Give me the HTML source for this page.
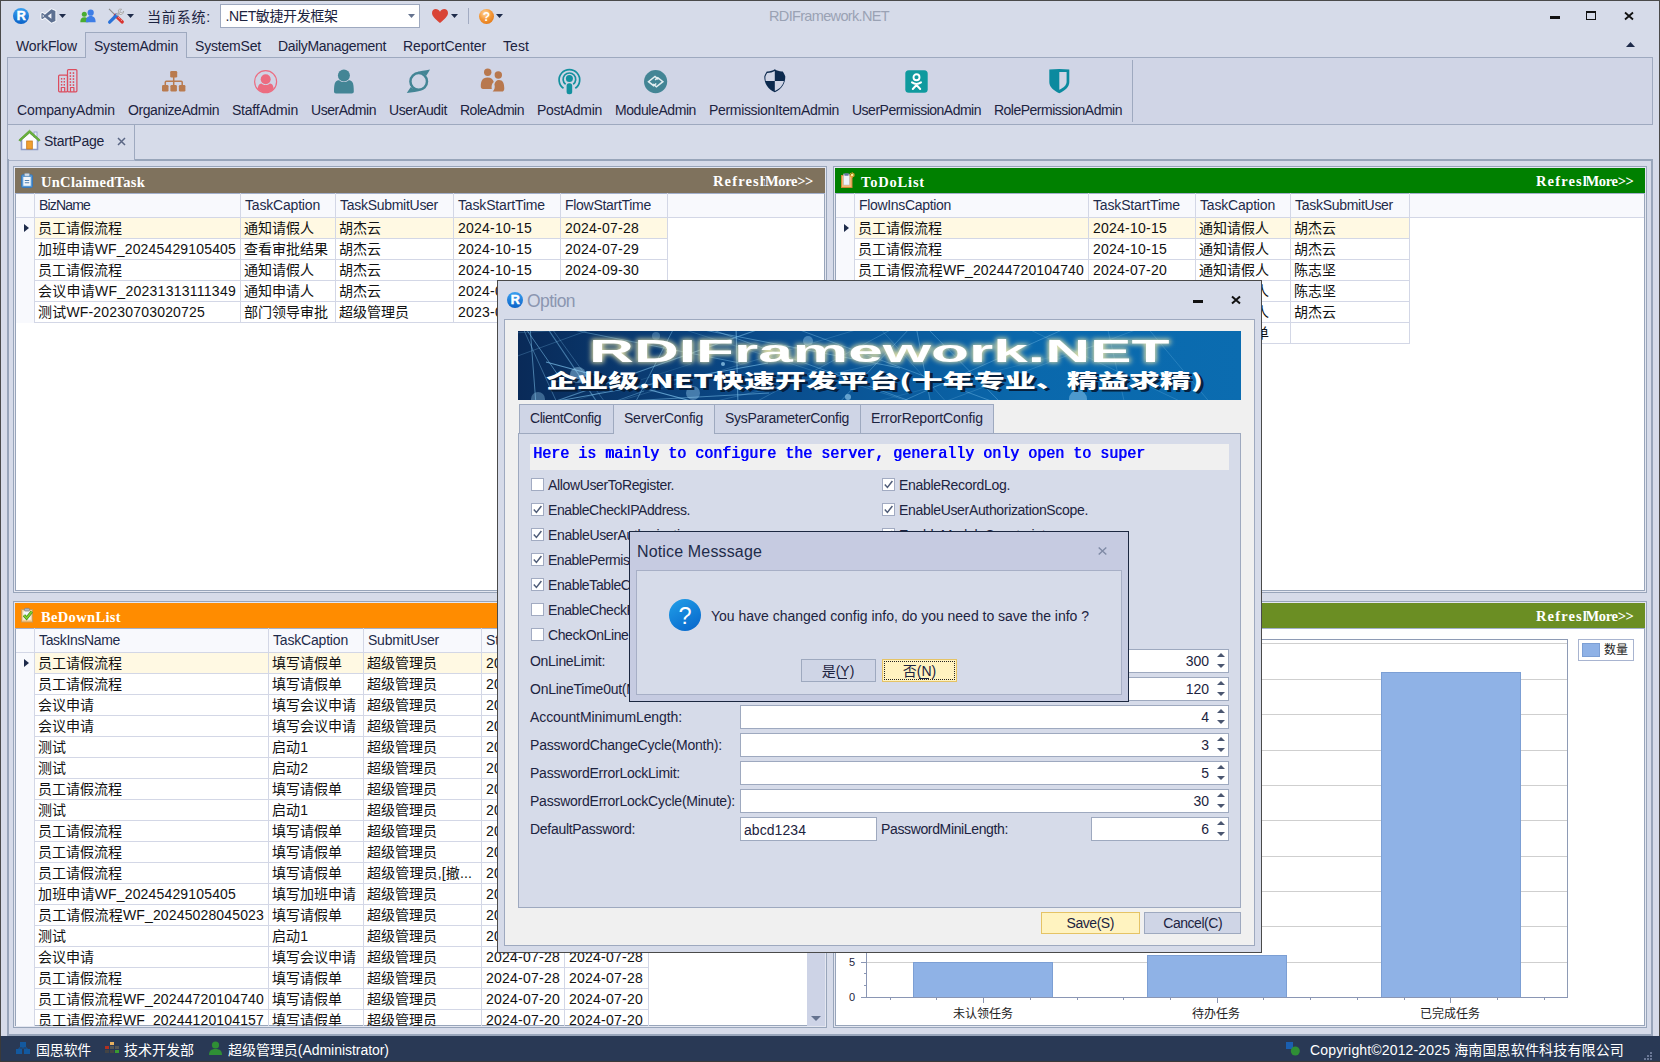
<!DOCTYPE html>
<html lang="zh-CN"><head><meta charset="utf-8"><title>RDIFramework.NET</title>
<style>
html,body{margin:0;padding:0;background:#d6dbe9}
#root{position:relative;width:1660px;height:1062px;overflow:hidden;font-family:"Liberation Sans","Noto Sans CJK SC",sans-serif;font-size:14px}
.a{position:absolute;box-sizing:border-box}
.t{white-space:pre}
svg{display:block;overflow:visible}
</style></head>
<body><div id="root">
<div class="a" style="left:0px;top:0px;width:1660px;height:1062px;background:#d6dbe9;"></div>
<div class="a" style="left:0px;top:0px;width:1660px;height:1px;background:#4a4a4a;"></div>
<div class="a" style="left:0px;top:0px;width:1px;height:1062px;background:#4a4a4a;"></div>
<div class="a" style="left:1659px;top:0px;width:1px;height:1062px;background:#4a4a4a;"></div>
<svg class="a" style="left:13.0px;top:8.0px" width="16" height="16" viewBox="0 0 16 16"><defs><linearGradient id="rg21" x1="0" y1="0" x2="0" y2="1"><stop offset="0" stop-color="#3aa0f0"/><stop offset="1" stop-color="#0a62c8"/></linearGradient></defs><circle cx="8" cy="8" r="8" fill="url(#rg21)"/><text x="8.300" y="12.300" font-family="Liberation Sans,sans-serif" font-weight="bold" font-size="12.500" text-anchor="middle" fill="#fff" stroke="#fff" stroke-width=".5">R</text></svg>
<svg class="a" style="left:41px;top:9px" width="15" height="14" viewBox="0 0 15 14"><path fill-rule="evenodd" d="M10.400 0.300L14.400 2v10l-4 1.700-6.500-5.500-2.300 1.900L0.400 9.400V4.600l1.200-.7 2.300 1.900zM10.400 4.200L6.700 7l3.700 2.800zM1.700 5.600v2.800L3.100 7z" fill="#5d7091" stroke="#f6f8fc" stroke-width="2" paint-order="stroke" stroke-linejoin="round"/></svg>
<svg class="a" style="left:59px;top:14px" width="7" height="4" viewBox="0 0 7 4"><path d="M0 0h7l-3.5 4z" fill="#1e2b4a"/></svg>
<svg class="a" style="left:80px;top:9px" width="16" height="14" viewBox="0 0 16 14"><circle cx="4.300" cy="5.300" r="2.500" fill="#49ad31"/><path d="M0.300 13.200c0-3.400 1.200-5 4-5s4 1.600 4 5z" fill="#49ad31"/><circle cx="10.700" cy="3.700" r="3.100" fill="#3d7de6"/><path d="M5.800 13.300c0-4 1.600-6.200 4.900-6.200s4.900 2.200 4.900 6.200z" fill="#3d7de6"/></svg>
<svg class="a" style="left:108px;top:8px" width="16" height="16" viewBox="0 0 16 16"><path d="M1 0.800l6.500 6.500" stroke="#8a8a8a" stroke-width="1.100"/><path d="M7.300 7.300l7 6.700" stroke="#d9332f" stroke-width="3.200" stroke-linecap="round"/><path d="M8.300 7.300l6 5.800" stroke="#fff" stroke-width=".8" stroke-dasharray="1 1.200"/><path d="M1.600 14.200L8.800 7" stroke="#2a72d8" stroke-width="3.200" stroke-linecap="round"/><path d="M8.500 7.300l2.500-2.500" stroke="#b8b8b8" stroke-width="2.200"/><path d="M10.300 2.200a3 3 0 0 1 3.300-1l-1.700 1.700.4 1.600 1.600.4 1.700-1.700a3 3 0 0 1-4 3.200z" fill="#e8e8e8" stroke="#8a8a8a" stroke-width=".6"/></svg>
<svg class="a" style="left:127px;top:14px" width="7" height="4" viewBox="0 0 7 4"><path d="M0 0h7l-3.5 4z" fill="#1e2b4a"/></svg>
<div class="a t" style="top:6.5px;font-size:14px;line-height:20px;color:#1c2340;letter-spacing:0.822px;left:147px;">当前系统:</div>
<div class="a" style="left:220px;top:4px;width:200px;height:24px;background:#fff;border:1px solid #9ea9bf;box-sizing:border-box;"></div>
<div class="a t" style="top:6px;font-size:14px;line-height:20px;color:#1c2340;letter-spacing:-0.389px;left:225.5px;">.NET敏捷开发框架</div>
<svg class="a" style="left:408px;top:14px" width="7" height="4" viewBox="0 0 7 4"><path d="M0 0h7l-3.5 4z" fill="#65738f"/></svg>
<svg class="a" style="left:432px;top:9px" width="16" height="14" viewBox="0 0 16 14"><path transform="scale(.941 1)" d="M8.5 14C3 9.5 0 7 0 4 0 1.500 1.800 0 4 0c1.800 0 3.500 1 4.500 2.800C9.500 1 11.200 0 13 0c2.200 0 4 1.500 4 4 0 3-3 5.500-8.500 10z" fill="#d94436"/></svg>
<svg class="a" style="left:451px;top:14px" width="7" height="4" viewBox="0 0 7 4"><path d="M0 0h7l-3.5 4z" fill="#1e2b4a"/></svg>
<div class="a" style="left:468px;top:8px;width:1px;height:16px;background:#a2abc2;"></div>
<svg class="a" style="left:478.5px;top:9px" width="15" height="15" viewBox="0 0 15 15"><defs><radialGradient id="qg" cx=".4" cy=".3" r=".8"><stop offset="0" stop-color="#ffd9a0"/><stop offset=".5" stop-color="#f59a3a"/><stop offset="1" stop-color="#e07412"/></radialGradient></defs><circle cx="7.500" cy="7.500" r="7.500" fill="url(#qg)"/><text x="7.500" y="12" font-size="12" font-weight="bold" text-anchor="middle" fill="#fff" font-family="Liberation Sans,sans-serif">?</text></svg>
<svg class="a" style="left:496px;top:14px" width="7" height="4" viewBox="0 0 7 4"><path d="M0 0h7l-3.5 4z" fill="#1e2b4a"/></svg>
<div class="a t" style="top:6px;font-size:14.5px;line-height:20px;color:#9aa2b4;letter-spacing:-0.657px;left:769px;">RDIFramework.NET</div>
<div class="a" style="left:1550px;top:16px;width:10px;height:3px;background:#111;"></div>
<div class="a" style="left:1586px;top:11px;width:10px;height:9px;border:1px solid #111;box-sizing:border-box;border-top-width:2px;"></div>
<svg class="a" style="left:1624px;top:12px" width="10" height="8" viewBox="0 0 10 8"><path d="M1 0.5L9 7.500M9 0.500L1 7.500" stroke="#111" stroke-width="1.800"/></svg>
<svg class="a" style="left:1626px;top:42px" width="9" height="5" viewBox="0 0 9 5"><path d="M0 5h9l-4.5 -5z" fill="#1e2b4a"/></svg>
<div class="a" style="left:7px;top:57px;width:1646px;height:68px;background:#d0d5e6;border:1px solid #9ea9bf;box-sizing:border-box;"></div>
<div class="a" style="left:85px;top:32px;width:102px;height:26px;background:#d0d5e6;border:1px solid #9ea9bf;box-sizing:border-box;border-bottom:none;"></div>
<div class="a t" style="top:36px;font-size:14px;line-height:20px;color:#1c2340;letter-spacing:-0.121px;left:16px;">WorkFlow</div>
<div class="a t" style="top:36px;font-size:14px;line-height:20px;color:#1c2340;letter-spacing:-0.214px;left:94px;">SystemAdmin</div>
<div class="a t" style="top:36px;font-size:14px;line-height:20px;color:#1c2340;letter-spacing:-0.189px;left:195px;">SystemSet</div>
<div class="a t" style="top:36px;font-size:14px;line-height:20px;color:#1c2340;letter-spacing:-0.323px;left:278px;">DailyManagement</div>
<div class="a t" style="top:36px;font-size:14px;line-height:20px;color:#1c2340;letter-spacing:-0.087px;left:403px;">ReportCenter</div>
<div class="a t" style="top:36px;font-size:14px;line-height:20px;color:#1c2340;letter-spacing:0.078px;left:503px;">Test</div>
<div class="a t" style="top:100px;font-size:14px;line-height:20px;color:#1c2340;letter-spacing:-0.134px;left:17px;">CompanyAdmin</div>
<div class="a t" style="top:100px;font-size:14px;line-height:20px;color:#1c2340;letter-spacing:-0.423px;left:128px;">OrganizeAdmin</div>
<div class="a t" style="top:100px;font-size:14px;line-height:20px;color:#1c2340;letter-spacing:-0.223px;left:232px;">StaffAdmin</div>
<div class="a t" style="top:100px;font-size:14px;line-height:20px;color:#1c2340;letter-spacing:-0.472px;left:311px;">UserAdmin</div>
<div class="a t" style="top:100px;font-size:14px;line-height:20px;color:#1c2340;letter-spacing:-0.385px;left:389px;">UserAudit</div>
<div class="a t" style="top:100px;font-size:14px;line-height:20px;color:#1c2340;letter-spacing:-0.498px;left:460px;">RoleAdmin</div>
<div class="a t" style="top:100px;font-size:14px;line-height:20px;color:#1c2340;letter-spacing:-0.300px;left:537px;">PostAdmin</div>
<div class="a t" style="top:100px;font-size:14px;line-height:20px;color:#1c2340;letter-spacing:-0.419px;left:615px;">ModuleAdmin</div>
<div class="a t" style="top:100px;font-size:14px;line-height:20px;color:#1c2340;letter-spacing:-0.324px;left:709px;">PermissionItemAdmin</div>
<div class="a t" style="top:100px;font-size:14px;line-height:20px;color:#1c2340;letter-spacing:-0.499px;left:852px;">UserPermissionAdmin</div>
<div class="a t" style="top:100px;font-size:14px;line-height:20px;color:#1c2340;letter-spacing:-0.512px;left:994px;">RolePermissionAdmin</div>
<div class="a" style="left:1132px;top:60px;width:1px;height:62px;background:#9ea9bf;"></div>
<svg class="a" style="left:58px;top:69px" width="20" height="24" viewBox="0 0 20 24"><g fill="none" stroke="#dc4c5e" stroke-width="1.200" stroke-linejoin="round"><rect x="0.600" y="6.200" width="8.900" height="16.600" rx="1"/><rect x="9.500" y="0.600" width="9.400" height="22.200" rx="1"/><path d="M3.300 22.800v-4.300h3.400v4.300M12.500 22.800v-4.300h3.400v4.300"/></g><g fill="#dc4c5e"><rect x="2.9" y="9" width="1.400" height="1.600"/><rect x="5.6" y="9" width="1.400" height="1.600"/><rect x="2.9" y="12" width="1.400" height="1.600"/><rect x="5.6" y="12" width="1.400" height="1.600"/><rect x="2.9" y="15" width="1.400" height="1.600"/><rect x="5.6" y="15" width="1.400" height="1.600"/><rect x="11.6" y="3.2" width="1.500" height="1.700"/><rect x="14.7" y="3.2" width="1.500" height="1.700"/><rect x="11.6" y="6.2" width="1.500" height="1.700"/><rect x="14.7" y="6.2" width="1.500" height="1.700"/><rect x="11.6" y="9.2" width="1.500" height="1.700"/><rect x="14.7" y="9.2" width="1.500" height="1.700"/><rect x="11.6" y="12.2" width="1.500" height="1.700"/><rect x="14.7" y="12.2" width="1.500" height="1.700"/><rect x="11.6" y="15.2" width="1.500" height="1.700"/><rect x="14.7" y="15.2" width="1.500" height="1.700"/></g></svg>
<svg class="a" style="left:162px;top:71px" width="24" height="21" viewBox="0 0 24 21"><g fill="#b97b4f"><rect x="8.200" y="0" width="7" height="6.600" rx="1.300"/><rect x="0" y="14" width="6.500" height="6.400" rx="1.200"/><rect x="8.400" y="14" width="6.500" height="6.400" rx="1.200"/><rect x="16.900" y="14" width="6.500" height="6.400" rx="1.200"/></g><path d="M11.700 6v8.500M3.300 14.500V11.200q0-1 1-1H19.200q1 0 1 1v3.300" fill="none" stroke="#b97b4f" stroke-width="1.500"/></svg>
<svg class="a" style="left:254px;top:69.5px" width="24" height="24" viewBox="0 0 24 24"><defs><clipPath id="sc"><circle cx="11.600" cy="11.700" r="10.600"/></clipPath></defs><circle cx="11.600" cy="11.700" r="11" fill="none" stroke="#ec6c80" stroke-width="1.200"/><circle cx="11.700" cy="9.200" r="5" fill="#ec6c80"/><path d="M3.500 24c0-6 .5-10.500 4-10.500 1.300 1 2.600 1.500 4.200 1.500s2.900-.5 4.200-1.500c3.500 0 4 4.500 4 10.500z" fill="#ec6c80" clip-path="url(#sc)"/></svg>
<svg class="a" style="left:333px;top:68.5px" width="22" height="25" viewBox="0 0 22 25"><circle cx="10.900" cy="6.500" r="6" fill="#438595"/><path d="M1 22.500c0-4 .300-8 1.500-9.500 1-1.300 2.500-1.800 4-1.600 1.300 1.100 2.800 1.700 4.400 1.700s3.100-.6 4.400-1.700c1.500-.2 3 .3 4 1.600 1.200 1.500 1.500 5.500 1.500 9.500 0 1.300-.8 2-2 2H3c-1.200 0-2-.7-2-2z" fill="#438595"/></svg>
<svg class="a" style="left:406px;top:69px" width="25" height="25" viewBox="0 0 25 25"><circle cx="12.700" cy="12.400" r="8.300" fill="none" stroke="#438595" stroke-width="2.500"/><path d="M9.500 3.600C14 1.800 19 1.500 24 0.500c-1.300 2.200-2.400 4.300-3.800 6.200-2.500-2.600-6-3.500-10.700-3.100z" fill="#438595"/><path d="M16 21.200C11.500 23 6 23.300 0.800 24c1.300-2 2.600-4.100 4-6 2.500 2.600 6.500 3.500 11.200 3.200z" fill="#438595"/></svg>
<svg class="a" style="left:480px;top:68px" width="25" height="25" viewBox="0 0 25 25"><g fill="#b8784e"><circle cx="7.700" cy="4.300" r="3.700"/><path d="M0.800 18.500c0-5 1.200-9 6.700-9 3.700 0 5.600 2 6.300 4.600-2 1.600-2.600 4.200-2 6.900H3c-1.400 0-2.200-.9-2.200-2.500z"/><circle cx="18.300" cy="7" r="3.700"/><path d="M12.600 23.600c2.200-1.800 2.600-4.500 1.800-7.300.9-2.700 1.900-4.300 4.500-4.300 4 0 5.400 3.300 5.400 8.500 0 2-.9 3.100-2.500 3.100z"/></g></svg>
<svg class="a" style="left:558px;top:68px" width="24" height="27" viewBox="0 0 24 27"><g fill="none" stroke="#14919f" stroke-width="1.700"><path d="M5.500 20.300A10.300 10.300 0 1 1 17.300 20.300"/><path d="M7.600 16.300A6.300 6.300 0 1 1 15.200 16.300"/></g><circle cx="11.400" cy="10.600" r="3.500" fill="#14919f"/><rect x="8.600" y="15.300" width="5.600" height="11" rx="2.500" fill="#14919f"/></svg>
<svg class="a" style="left:644px;top:69.8px" width="24" height="24" viewBox="0 0 24 24"><circle cx="11.600" cy="11.600" r="11.600" fill="#438595"/><g fill="none" stroke="#e4eef1" stroke-width="1.500" stroke-linejoin="miter"><path d="M14.400 9.300L11 6.500 4.500 11.650 9.600 15.700 12.300 13.500"/><path d="M9 14L12.400 16.800 18.900 11.650 13.800 7.600 11.100 9.800"/></g></svg>
<svg class="a" style="left:764px;top:68.6px" width="22" height="24" viewBox="0 0 22 24"><path d="M10.800 0.300C8.500 1.800 5.800 2.600 2.800 2.400 1.800 4 0.800 5.500 0.300 7.500c0 7 3.500 12.500 10.500 15.700C17.800 20 21.300 14.500 21.300 7.500c-.5-2-1.500-3.500-2.500-5.100-3 .2-5.700-.6-8-2.100z" fill="#0c2a4e"/><path d="M10.800 2v9.900H1.700C1.400 10.200 1.300 8.800 1.400 7.600c.4-1.300 1-2.400 1.800-3.700 2.900 0 5.500-.6 7.600-1.900z" fill="#d0d5e6"/><path d="M10.800 11.900h9.100c-.9 4.100-3.800 7.600-9.100 10.100z" fill="#d0d5e6"/></svg>
<svg class="a" style="left:905px;top:69.8px" width="23" height="23" viewBox="0 0 23 23"><rect x="0.300" y="0.300" width="22.400" height="22.400" rx="3.500" fill="#0f9a9e"/><circle cx="11.500" cy="7.300" r="3" fill="none" stroke="#fff" stroke-width="1.900"/><path d="M7 12.400c2.800 1.900 6.200 1.900 9 0M11.500 14v1.500M11.500 15l-3.700 4M11.500 15l3.700 4" fill="none" stroke="#fff" stroke-width="2" stroke-linecap="round"/></svg>
<svg class="a" style="left:1049px;top:68.6px" width="21" height="25" viewBox="0 0 21 25"><path d="M0.300 0.500Q10.200 -0.300 20.300 0.500V13c0 5-4.200 8.500-10 11.200C4.500 21.500 0.300 18 0.300 13z" fill="#0b8a9f"/><path d="M10.300 3h7.300v9.800c0 3.300-2.800 6-7.300 8z" fill="#d0d5e6"/></svg>
<div class="a" style="left:7px;top:159px;width:1646px;height:877px;background:#d6dbe9;border:2px solid #98a5ba;box-sizing:border-box;"></div>
<div class="a" style="left:7px;top:125px;width:128px;height:36px;background:#d6dbe9;border:1px solid #9ea9bf;box-sizing:border-box;border-bottom:none;border-top:none;"></div>
<div class="a" style="left:7px;top:159px;width:2px;height:4px;background:#98a5ba;"></div>
<div class="a" style="left:9px;top:160px;width:126px;height:1px;background:#a9b3c8;"></div>
<svg class="a" style="left:18px;top:129px" width="23" height="22" viewBox="0 0 23 22"><path d="M3.500 10v10.500h16V10L11.500 3z" fill="#fdfdff" stroke="#8d9cc8" stroke-width="1.600"/><rect x="8.700" y="12" width="5.600" height="8" fill="#f0a030" stroke="#c87818" stroke-width=".8"/><rect x="16" y="3" width="3" height="5" fill="#e8ecf8" stroke="#8d9cc8" stroke-width=".8"/><path d="M0.800 11L11.500 1.200 22.200 11l-1.300 1.300L11.500 4 2.100 12.300z" fill="#6ab43a" stroke="#4a9020" stroke-width=".6"/></svg>
<div class="a t" style="top:131px;font-size:14px;line-height:20px;color:#1c2340;letter-spacing:-0.252px;left:44px;">StartPage</div>
<svg class="a" style="left:117px;top:137px" width="9" height="9" viewBox="0 0 9 9"><path d="M1 1l7 7M8 1l-7 7" stroke="#5a6684" stroke-width="1.500"/></svg>
<div class="a" style="left:0px;top:1036px;width:1660px;height:26px;background:#293955;"></div>
<div class="a" style="left:0px;top:1061px;width:1660px;height:1px;background:#3a3a3a;"></div>
<div class="a" style="left:0px;top:1036px;width:1px;height:26px;background:#3a3a3a;"></div>
<svg class="a" style="left:16px;top:1042px" width="14" height="13" viewBox="0 0 14 13"><rect x="4" y="0" width="6" height="5" fill="#13599f"/><rect x="0" y="7" width="6" height="5" fill="#13599f"/><rect x="8" y="7" width="6" height="5" fill="#13599f"/><path d="M3 7V6h8v1M7 5v1" stroke="#13599f" fill="none"/></svg>
<div class="a t" style="top:1039.5px;font-size:14px;line-height:20px;color:#fff;letter-spacing:-0.250px;left:36px;">国思软件</div>
<svg class="a" style="left:105px;top:1042px" width="14" height="13" viewBox="0 0 14 13"><rect x="5" y="0" width="4" height="3" fill="#e8b060"/><rect x="0" y="4" width="4" height="3" fill="#b03020"/><rect x="5" y="4" width="4" height="3" fill="#555"/><rect x="10" y="4" width="4" height="3" fill="#555"/><rect x="0" y="8" width="4" height="3" fill="#444"/><rect x="5" y="8" width="4" height="3" fill="#444"/><rect x="10" y="8" width="4" height="3" fill="#3a9a30"/></svg>
<div class="a t" style="top:1039.5px;font-size:14px;line-height:20px;color:#fff;left:124px;">技术开发部</div>
<svg class="a" style="left:209px;top:1041px" width="13" height="14" viewBox="0 0 13 14"><circle cx="6.500" cy="4" r="3.600" fill="#2f8f35"/><path d="M0 14c0-4 2-6 6.500-6s6.500 2 6.500 6z" fill="#2f8f35"/></svg>
<div class="a t" style="top:1039.5px;font-size:14px;line-height:20px;color:#fff;letter-spacing:-0.040px;left:228px;">超级管理员(Administrator)</div>
<svg class="a" style="left:1286px;top:1042px" width="16" height="14" viewBox="0 0 16 14"><rect x="0" y="0" width="7" height="7" fill="#1a5fb0"/><circle cx="9.300" cy="9" r="4.500" fill="#2f8f35"/></svg>
<div class="a t" style="top:1039.5px;font-size:14px;line-height:20px;color:#fff;letter-spacing:0.154px;left:1310px;">Copyright©2012-2025 海南国思软件科技有限公司</div>
<svg class="a" style="left:1644px;top:1052px" width="9" height="9" viewBox="0 0 9 9"><g fill="#6a7896"><rect x="6" y="0" width="2" height="2"/><rect x="3" y="3" width="2" height="2"/><rect x="6" y="3" width="2" height="2"/><rect x="0" y="6" width="2" height="2"/><rect x="3" y="6" width="2" height="2"/><rect x="6" y="6" width="2" height="2"/></g></svg>
<div class="a" style="left:13px;top:166px;width:814px;height:427px;background:#e4e7f1;border:1px solid #98a5ba;box-sizing:border-box;"></div>
<div class="a" style="left:15px;top:168px;width:810px;height:423px;background:#fff;border:1px solid #98a5ba;box-sizing:border-box;"></div>
<div class="a" style="left:15px;top:168px;width:810px;height:25px;background:#7f725d;"></div>
<svg class="a" style="left:21px;top:173px" width="12" height="15" viewBox="0 0 12 15"><rect x="0.500" y="1.800" width="11" height="12.700" rx="1.300" fill="#5a9ad4" stroke="#3a78b8"/><rect x="3.500" y="0.300" width="5" height="3" rx="1" fill="#cfdcea" stroke="#7890a8" stroke-width=".6"/><rect x="2.300" y="4" width="7.400" height="8.800" fill="#f2f6fb"/><path d="M3.800 7.500h4.400M3.800 9.800h4.400" stroke="#4f7fb0" stroke-width="1.100"/></svg>
<div class="a t" style="top:171.5px;font-size:14.5px;line-height:20px;color:#fff;font-family:'Liberation Serif','Noto Serif CJK SC',serif;font-weight:bold;letter-spacing:0.292px;left:41px;">UnClaimedTask</div>
<div class="a t" style="top:170.5px;font-size:14.5px;line-height:20px;color:#fff;font-family:'Liberation Serif','Noto Serif CJK SC',serif;font-weight:bold;letter-spacing:1.134px;left:713px;">Refresh</div>
<div class="a t" style="top:170.5px;font-size:14.5px;line-height:20px;color:#fff;font-family:'Liberation Serif','Noto Serif CJK SC',serif;font-weight:bold;letter-spacing:-0.346px;left:765px;background:#7f725d;line-height:16px;margin-top:2px;">More&gt;&gt;</div>
<div class="a" style="left:16px;top:193px;width:808px;height:24px;background:#f8f9fd;"></div>
<div class="a" style="left:15px;top:193px;width:810px;height:1px;background:#a3b0cc;"></div>
<div class="a" style="left:16px;top:217px;width:808px;height:1px;background:#d3d7e6;"></div>
<div class="a" style="left:16px;top:218px;width:18px;height:105px;background:#f8f9fd;"></div>
<div class="a" style="left:35px;top:218px;width:632px;height:20px;background:#fff9e3;"></div>
<div class="a" style="left:34px;top:238px;width:634px;height:1px;background:#d3d7e6;"></div>
<div class="a" style="left:34px;top:259px;width:634px;height:1px;background:#d3d7e6;"></div>
<div class="a" style="left:34px;top:280px;width:634px;height:1px;background:#d3d7e6;"></div>
<div class="a" style="left:34px;top:301px;width:634px;height:1px;background:#d3d7e6;"></div>
<div class="a" style="left:34px;top:322px;width:634px;height:1px;background:#d3d7e6;"></div>
<div class="a" style="left:34px;top:193px;width:1px;height:130px;background:#d3d7e6;"></div>
<div class="a" style="left:240px;top:193px;width:1px;height:130px;background:#d3d7e6;"></div>
<div class="a" style="left:335px;top:193px;width:1px;height:130px;background:#d3d7e6;"></div>
<div class="a" style="left:453px;top:193px;width:1px;height:130px;background:#d3d7e6;"></div>
<div class="a" style="left:560px;top:193px;width:1px;height:130px;background:#d3d7e6;"></div>
<div class="a" style="left:667px;top:193px;width:1px;height:130px;background:#d3d7e6;"></div>
<svg class="a" style="left:24px;top:224.0px" width="5" height="8" viewBox="0 0 5 8"><path d="M0 0v8l5 -4.0z" fill="#1e2b4a"/></svg>
<div class="a t" style="top:195px;font-size:14px;line-height:20px;color:#1e2b4a;letter-spacing:-0.828px;left:39px;">BizName</div>
<div class="a t" style="top:195px;font-size:14px;line-height:20px;color:#1e2b4a;letter-spacing:-0.186px;left:245px;">TaskCaption</div>
<div class="a t" style="top:195px;font-size:14px;line-height:20px;color:#1e2b4a;letter-spacing:-0.280px;left:340px;">TaskSubmitUser</div>
<div class="a t" style="top:195px;font-size:14px;line-height:20px;color:#1e2b4a;letter-spacing:-0.150px;left:458px;">TaskStartTime</div>
<div class="a t" style="top:195px;font-size:14px;line-height:20px;color:#1e2b4a;letter-spacing:-0.286px;left:565px;">FlowStartTime</div>
<div class="a t" style="top:217px;font-size:14px;line-height:20px;color:#111;left:38px;max-width:201px;overflow:hidden;height:20px;line-height:20px;margin-top:0.500px;">员工请假流程</div>
<div class="a t" style="top:217px;font-size:14px;line-height:20px;color:#111;left:244px;max-width:90px;overflow:hidden;height:20px;line-height:20px;margin-top:0.500px;">通知请假人</div>
<div class="a t" style="top:217px;font-size:14px;line-height:20px;color:#111;left:339px;max-width:113px;overflow:hidden;height:20px;line-height:20px;margin-top:0.500px;">胡杰云</div>
<div class="a t" style="top:217px;font-size:14px;line-height:20px;color:#111;letter-spacing:0.237px;left:458px;max-width:102px;overflow:hidden;height:20px;line-height:20px;margin-top:0.500px;">2024-10-15</div>
<div class="a t" style="top:217px;font-size:14px;line-height:20px;color:#111;letter-spacing:0.237px;left:565px;max-width:102px;overflow:hidden;height:20px;line-height:20px;margin-top:0.500px;">2024-07-28</div>
<div class="a t" style="top:238px;font-size:14px;line-height:20px;color:#111;letter-spacing:0.164px;left:38px;max-width:201px;overflow:hidden;height:20px;line-height:20px;margin-top:0.500px;">加班申请WF_20245429105405</div>
<div class="a t" style="top:238px;font-size:14px;line-height:20px;color:#111;left:244px;max-width:90px;overflow:hidden;height:20px;line-height:20px;margin-top:0.500px;">查看审批结果</div>
<div class="a t" style="top:238px;font-size:14px;line-height:20px;color:#111;left:339px;max-width:113px;overflow:hidden;height:20px;line-height:20px;margin-top:0.500px;">胡杰云</div>
<div class="a t" style="top:238px;font-size:14px;line-height:20px;color:#111;letter-spacing:0.237px;left:458px;max-width:102px;overflow:hidden;height:20px;line-height:20px;margin-top:0.500px;">2024-10-15</div>
<div class="a t" style="top:238px;font-size:14px;line-height:20px;color:#111;letter-spacing:0.237px;left:565px;max-width:102px;overflow:hidden;height:20px;line-height:20px;margin-top:0.500px;">2024-07-29</div>
<div class="a t" style="top:259px;font-size:14px;line-height:20px;color:#111;left:38px;max-width:201px;overflow:hidden;height:20px;line-height:20px;margin-top:0.500px;">员工请假流程</div>
<div class="a t" style="top:259px;font-size:14px;line-height:20px;color:#111;left:244px;max-width:90px;overflow:hidden;height:20px;line-height:20px;margin-top:0.500px;">通知请假人</div>
<div class="a t" style="top:259px;font-size:14px;line-height:20px;color:#111;left:339px;max-width:113px;overflow:hidden;height:20px;line-height:20px;margin-top:0.500px;">胡杰云</div>
<div class="a t" style="top:259px;font-size:14px;line-height:20px;color:#111;letter-spacing:0.237px;left:458px;max-width:102px;overflow:hidden;height:20px;line-height:20px;margin-top:0.500px;">2024-10-15</div>
<div class="a t" style="top:259px;font-size:14px;line-height:20px;color:#111;letter-spacing:0.237px;left:565px;max-width:102px;overflow:hidden;height:20px;line-height:20px;margin-top:0.500px;">2024-09-30</div>
<div class="a t" style="top:280px;font-size:14px;line-height:20px;color:#111;letter-spacing:0.263px;left:38px;max-width:201px;overflow:hidden;height:20px;line-height:20px;margin-top:0.500px;">会议申请WF_20231313111349</div>
<div class="a t" style="top:280px;font-size:14px;line-height:20px;color:#111;left:244px;max-width:90px;overflow:hidden;height:20px;line-height:20px;margin-top:0.500px;">通知申请人</div>
<div class="a t" style="top:280px;font-size:14px;line-height:20px;color:#111;left:339px;max-width:113px;overflow:hidden;height:20px;line-height:20px;margin-top:0.500px;">胡杰云</div>
<div class="a t" style="top:280px;font-size:14px;line-height:20px;color:#111;letter-spacing:0.237px;left:458px;max-width:102px;overflow:hidden;height:20px;line-height:20px;margin-top:0.500px;">2024-07-20</div>
<div class="a t" style="top:301px;font-size:14px;line-height:20px;color:#111;letter-spacing:0.188px;left:38px;max-width:201px;overflow:hidden;height:20px;line-height:20px;margin-top:0.500px;">测试WF-20230703020725</div>
<div class="a t" style="top:301px;font-size:14px;line-height:20px;color:#111;left:244px;max-width:90px;overflow:hidden;height:20px;line-height:20px;margin-top:0.500px;">部门领导审批</div>
<div class="a t" style="top:301px;font-size:14px;line-height:20px;color:#111;left:339px;max-width:113px;overflow:hidden;height:20px;line-height:20px;margin-top:0.500px;">超级管理员</div>
<div class="a t" style="top:301px;font-size:14px;line-height:20px;color:#111;letter-spacing:0.237px;left:458px;max-width:102px;overflow:hidden;height:20px;line-height:20px;margin-top:0.500px;">2023-07-03</div>
<div class="a" style="left:833px;top:166px;width:814px;height:427px;background:#e4e7f1;border:1px solid #98a5ba;box-sizing:border-box;"></div>
<div class="a" style="left:835px;top:168px;width:810px;height:423px;background:#fff;border:1px solid #98a5ba;box-sizing:border-box;"></div>
<div class="a" style="left:835px;top:168px;width:810px;height:25px;background:#008000;"></div>
<svg class="a" style="left:841px;top:172px" width="15" height="16" viewBox="0 0 15 16"><rect x="0.500" y="3.500" width="10.500" height="12" fill="#f3b874" stroke="#d08838"/><rect x="2.700" y="2" width="5.600" height="11" fill="#eef2fa" stroke="#b0b8c8" stroke-width=".5"/><rect x="3.300" y="1.300" width="4.400" height="2.400" rx=".6" fill="#6878a0"/><path d="M11.200 0.200v5.600M8.400 3h5.600M9.200 1l4 4M13.200 1l-4 4" stroke="#f49a28" stroke-width="1"/><circle cx="11.200" cy="3" r="1.300" fill="#ffe9a0"/></svg>
<div class="a t" style="top:171.5px;font-size:14.5px;line-height:20px;color:#fff;font-family:'Liberation Serif','Noto Serif CJK SC',serif;font-weight:bold;letter-spacing:0.814px;left:861px;">ToDoList</div>
<div class="a t" style="top:170.5px;font-size:14.5px;line-height:20px;color:#fff;font-family:'Liberation Serif','Noto Serif CJK SC',serif;font-weight:bold;letter-spacing:1.134px;left:1536px;">Refresh</div>
<div class="a t" style="top:170.5px;font-size:14.5px;line-height:20px;color:#fff;font-family:'Liberation Serif','Noto Serif CJK SC',serif;font-weight:bold;letter-spacing:-0.346px;left:1585.5px;background:#008000;line-height:16px;margin-top:2px;">More&gt;&gt;</div>
<div class="a" style="left:836px;top:193px;width:808px;height:24px;background:#f8f9fd;"></div>
<div class="a" style="left:835px;top:193px;width:810px;height:1px;background:#a3b0cc;"></div>
<div class="a" style="left:836px;top:217px;width:808px;height:1px;background:#d3d7e6;"></div>
<div class="a" style="left:836px;top:218px;width:18px;height:126px;background:#f8f9fd;"></div>
<div class="a" style="left:855px;top:218px;width:554px;height:20px;background:#fff9e3;"></div>
<div class="a" style="left:854px;top:238px;width:556px;height:1px;background:#d3d7e6;"></div>
<div class="a" style="left:854px;top:259px;width:556px;height:1px;background:#d3d7e6;"></div>
<div class="a" style="left:854px;top:280px;width:556px;height:1px;background:#d3d7e6;"></div>
<div class="a" style="left:854px;top:301px;width:556px;height:1px;background:#d3d7e6;"></div>
<div class="a" style="left:854px;top:322px;width:556px;height:1px;background:#d3d7e6;"></div>
<div class="a" style="left:854px;top:343px;width:556px;height:1px;background:#d3d7e6;"></div>
<div class="a" style="left:854px;top:193px;width:1px;height:151px;background:#d3d7e6;"></div>
<div class="a" style="left:1088px;top:193px;width:1px;height:151px;background:#d3d7e6;"></div>
<div class="a" style="left:1195px;top:193px;width:1px;height:151px;background:#d3d7e6;"></div>
<div class="a" style="left:1290px;top:193px;width:1px;height:151px;background:#d3d7e6;"></div>
<div class="a" style="left:1409px;top:193px;width:1px;height:151px;background:#d3d7e6;"></div>
<svg class="a" style="left:844px;top:224.0px" width="5" height="8" viewBox="0 0 5 8"><path d="M0 0v8l5 -4.0z" fill="#1e2b4a"/></svg>
<div class="a t" style="top:195px;font-size:14px;line-height:20px;color:#1e2b4a;letter-spacing:-0.321px;left:859px;">FlowInsCaption</div>
<div class="a t" style="top:195px;font-size:14px;line-height:20px;color:#1e2b4a;letter-spacing:-0.150px;left:1093px;">TaskStartTime</div>
<div class="a t" style="top:195px;font-size:14px;line-height:20px;color:#1e2b4a;letter-spacing:-0.186px;left:1200px;">TaskCaption</div>
<div class="a t" style="top:195px;font-size:14px;line-height:20px;color:#1e2b4a;letter-spacing:-0.280px;left:1295px;">TaskSubmitUser</div>
<div class="a t" style="top:217px;font-size:14px;line-height:20px;color:#111;left:858px;max-width:229px;overflow:hidden;height:20px;line-height:20px;margin-top:0.500px;">员工请假流程</div>
<div class="a t" style="top:217px;font-size:14px;line-height:20px;color:#111;letter-spacing:0.237px;left:1093px;max-width:102px;overflow:hidden;height:20px;line-height:20px;margin-top:0.500px;">2024-10-15</div>
<div class="a t" style="top:217px;font-size:14px;line-height:20px;color:#111;left:1199px;max-width:90px;overflow:hidden;height:20px;line-height:20px;margin-top:0.500px;">通知请假人</div>
<div class="a t" style="top:217px;font-size:14px;line-height:20px;color:#111;left:1294px;max-width:114px;overflow:hidden;height:20px;line-height:20px;margin-top:0.500px;">胡杰云</div>
<div class="a t" style="top:238px;font-size:14px;line-height:20px;color:#111;left:858px;max-width:229px;overflow:hidden;height:20px;line-height:20px;margin-top:0.500px;">员工请假流程</div>
<div class="a t" style="top:238px;font-size:14px;line-height:20px;color:#111;letter-spacing:0.237px;left:1093px;max-width:102px;overflow:hidden;height:20px;line-height:20px;margin-top:0.500px;">2024-10-15</div>
<div class="a t" style="top:238px;font-size:14px;line-height:20px;color:#111;left:1199px;max-width:90px;overflow:hidden;height:20px;line-height:20px;margin-top:0.500px;">通知请假人</div>
<div class="a t" style="top:238px;font-size:14px;line-height:20px;color:#111;left:1294px;max-width:114px;overflow:hidden;height:20px;line-height:20px;margin-top:0.500px;">胡杰云</div>
<div class="a t" style="top:259px;font-size:14px;line-height:20px;color:#111;letter-spacing:0.149px;left:858px;max-width:229px;overflow:hidden;height:20px;line-height:20px;margin-top:0.500px;">员工请假流程WF_20244720104740</div>
<div class="a t" style="top:259px;font-size:14px;line-height:20px;color:#111;letter-spacing:0.237px;left:1093px;max-width:102px;overflow:hidden;height:20px;line-height:20px;margin-top:0.500px;">2024-07-20</div>
<div class="a t" style="top:259px;font-size:14px;line-height:20px;color:#111;left:1199px;max-width:90px;overflow:hidden;height:20px;line-height:20px;margin-top:0.500px;">通知请假人</div>
<div class="a t" style="top:259px;font-size:14px;line-height:20px;color:#111;left:1294px;max-width:114px;overflow:hidden;height:20px;line-height:20px;margin-top:0.500px;">陈志坚</div>
<div class="a t" style="top:280px;font-size:14px;line-height:20px;color:#111;letter-spacing:0.149px;left:858px;max-width:229px;overflow:hidden;height:20px;line-height:20px;margin-top:0.500px;">员工请假流程WF_20244120104157</div>
<div class="a t" style="top:280px;font-size:14px;line-height:20px;color:#111;letter-spacing:0.237px;left:1093px;max-width:102px;overflow:hidden;height:20px;line-height:20px;margin-top:0.500px;">2024-07-20</div>
<div class="a t" style="top:280px;font-size:14px;line-height:20px;color:#111;left:1199px;max-width:90px;overflow:hidden;height:20px;line-height:20px;margin-top:0.500px;">通知请假人</div>
<div class="a t" style="top:280px;font-size:14px;line-height:20px;color:#111;left:1294px;max-width:114px;overflow:hidden;height:20px;line-height:20px;margin-top:0.500px;">陈志坚</div>
<div class="a t" style="top:301px;font-size:14px;line-height:20px;color:#111;left:858px;max-width:229px;overflow:hidden;height:20px;line-height:20px;margin-top:0.500px;">测试</div>
<div class="a t" style="top:301px;font-size:14px;line-height:20px;color:#111;letter-spacing:0.237px;left:1093px;max-width:102px;overflow:hidden;height:20px;line-height:20px;margin-top:0.500px;">2024-07-03</div>
<div class="a t" style="top:301px;font-size:14px;line-height:20px;color:#111;left:1199px;max-width:90px;overflow:hidden;height:20px;line-height:20px;margin-top:0.500px;">通知请假人</div>
<div class="a t" style="top:301px;font-size:14px;line-height:20px;color:#111;left:1294px;max-width:114px;overflow:hidden;height:20px;line-height:20px;margin-top:0.500px;">胡杰云</div>
<div class="a t" style="top:322px;font-size:14px;line-height:20px;color:#111;left:858px;max-width:229px;overflow:hidden;height:20px;line-height:20px;margin-top:0.500px;">员工请假流程</div>
<div class="a t" style="top:322px;font-size:14px;line-height:20px;color:#111;letter-spacing:0.237px;left:1093px;max-width:102px;overflow:hidden;height:20px;line-height:20px;margin-top:0.500px;">2024-07-03</div>
<div class="a t" style="top:322px;font-size:14px;line-height:20px;color:#111;left:1199px;max-width:90px;overflow:hidden;height:20px;line-height:20px;margin-top:0.500px;">填写请假单</div>
<div class="a" style="left:13px;top:601px;width:814px;height:427px;background:#e4e7f1;border:1px solid #98a5ba;box-sizing:border-box;"></div>
<div class="a" style="left:15px;top:603px;width:810px;height:423px;background:#fff;border:1px solid #98a5ba;box-sizing:border-box;"></div>
<div class="a" style="left:15px;top:603px;width:810px;height:25px;background:#ff8c00;"></div>
<svg class="a" style="left:21px;top:608px" width="13" height="15" viewBox="0 0 13 15"><rect x="0.500" y="1.500" width="11" height="12.500" fill="#f4d09c" stroke="#d09a50"/><rect x="2.300" y="3.300" width="7.400" height="8.400" fill="#f4f7fc"/><rect x="3.500" y="0.300" width="5" height="2.700" rx="1" fill="#b0b8c4" stroke="#707888" stroke-width=".6"/><path d="M3 7.200l2.600 3 5.200-6.600" fill="none" stroke="#3f8a18" stroke-width="3"/><path d="M3 7.200l2.600 3 5.200-6.600" fill="none" stroke="#7ed030" stroke-width="1.700"/></svg>
<div class="a t" style="top:606.5px;font-size:14.5px;line-height:20px;color:#fff;font-family:'Liberation Serif','Noto Serif CJK SC',serif;font-weight:bold;letter-spacing:0.345px;left:41px;">BeDownList</div>
<div class="a" style="left:15px;top:628px;width:810px;height:398px;overflow:hidden"><div class="a" style="left:-15px;top:-628px;width:1660px;height:1062px">
<div class="a" style="left:16px;top:628px;width:808px;height:24px;background:#f8f9fd;"></div>
<div class="a" style="left:15px;top:628px;width:810px;height:1px;background:#a3b0cc;"></div>
<div class="a" style="left:16px;top:652px;width:808px;height:1px;background:#d3d7e6;"></div>
<div class="a" style="left:16px;top:653px;width:18px;height:378px;background:#f8f9fd;"></div>
<div class="a" style="left:35px;top:653px;width:613px;height:20px;background:#fff9e3;"></div>
<div class="a" style="left:34px;top:673px;width:615px;height:1px;background:#d3d7e6;"></div>
<div class="a" style="left:34px;top:694px;width:615px;height:1px;background:#d3d7e6;"></div>
<div class="a" style="left:34px;top:715px;width:615px;height:1px;background:#d3d7e6;"></div>
<div class="a" style="left:34px;top:736px;width:615px;height:1px;background:#d3d7e6;"></div>
<div class="a" style="left:34px;top:757px;width:615px;height:1px;background:#d3d7e6;"></div>
<div class="a" style="left:34px;top:778px;width:615px;height:1px;background:#d3d7e6;"></div>
<div class="a" style="left:34px;top:799px;width:615px;height:1px;background:#d3d7e6;"></div>
<div class="a" style="left:34px;top:820px;width:615px;height:1px;background:#d3d7e6;"></div>
<div class="a" style="left:34px;top:841px;width:615px;height:1px;background:#d3d7e6;"></div>
<div class="a" style="left:34px;top:862px;width:615px;height:1px;background:#d3d7e6;"></div>
<div class="a" style="left:34px;top:883px;width:615px;height:1px;background:#d3d7e6;"></div>
<div class="a" style="left:34px;top:904px;width:615px;height:1px;background:#d3d7e6;"></div>
<div class="a" style="left:34px;top:925px;width:615px;height:1px;background:#d3d7e6;"></div>
<div class="a" style="left:34px;top:946px;width:615px;height:1px;background:#d3d7e6;"></div>
<div class="a" style="left:34px;top:967px;width:615px;height:1px;background:#d3d7e6;"></div>
<div class="a" style="left:34px;top:988px;width:615px;height:1px;background:#d3d7e6;"></div>
<div class="a" style="left:34px;top:1009px;width:615px;height:1px;background:#d3d7e6;"></div>
<div class="a" style="left:34px;top:1030px;width:615px;height:1px;background:#d3d7e6;"></div>
<div class="a" style="left:34px;top:628px;width:1px;height:403px;background:#d3d7e6;"></div>
<div class="a" style="left:268px;top:628px;width:1px;height:403px;background:#d3d7e6;"></div>
<div class="a" style="left:363px;top:628px;width:1px;height:403px;background:#d3d7e6;"></div>
<div class="a" style="left:481px;top:628px;width:1px;height:403px;background:#d3d7e6;"></div>
<div class="a" style="left:564px;top:628px;width:1px;height:403px;background:#d3d7e6;"></div>
<div class="a" style="left:648px;top:628px;width:1px;height:403px;background:#d3d7e6;"></div>
<svg class="a" style="left:24px;top:659.0px" width="5" height="8" viewBox="0 0 5 8"><path d="M0 0v8l5 -4.0z" fill="#1e2b4a"/></svg>
<div class="a t" style="top:630px;font-size:14px;line-height:20px;color:#1e2b4a;letter-spacing:-0.347px;left:39px;">TaskInsName</div>
<div class="a t" style="top:630px;font-size:14px;line-height:20px;color:#1e2b4a;letter-spacing:-0.186px;left:273px;">TaskCaption</div>
<div class="a t" style="top:630px;font-size:14px;line-height:20px;color:#1e2b4a;letter-spacing:-0.214px;left:368px;">SubmitUser</div>
<div class="a t" style="top:630px;font-size:14px;line-height:20px;color:#1e2b4a;letter-spacing:-0.017px;left:486px;">StartTime</div>
<div class="a t" style="top:630px;font-size:14px;line-height:20px;color:#1e2b4a;letter-spacing:-0.502px;left:569px;">EndTime</div>
<div class="a t" style="top:652px;font-size:14px;line-height:20px;color:#111;left:38px;max-width:229px;overflow:hidden;height:20px;line-height:20px;margin-top:0.500px;">员工请假流程</div>
<div class="a t" style="top:652px;font-size:14px;line-height:20px;color:#111;left:272px;max-width:90px;overflow:hidden;height:20px;line-height:20px;margin-top:0.500px;">填写请假单</div>
<div class="a t" style="top:652px;font-size:14px;line-height:20px;color:#111;left:367px;max-width:113px;overflow:hidden;height:20px;line-height:20px;margin-top:0.500px;">超级管理员</div>
<div class="a t" style="top:652px;font-size:14px;line-height:20px;color:#111;letter-spacing:0.237px;left:486px;max-width:78px;overflow:hidden;height:20px;line-height:20px;margin-top:0.500px;">2024-07-28</div>
<div class="a t" style="top:652px;font-size:14px;line-height:20px;color:#111;letter-spacing:0.237px;left:569px;max-width:79px;overflow:hidden;height:20px;line-height:20px;margin-top:0.500px;">2024-07-28</div>
<div class="a t" style="top:673px;font-size:14px;line-height:20px;color:#111;left:38px;max-width:229px;overflow:hidden;height:20px;line-height:20px;margin-top:0.500px;">员工请假流程</div>
<div class="a t" style="top:673px;font-size:14px;line-height:20px;color:#111;left:272px;max-width:90px;overflow:hidden;height:20px;line-height:20px;margin-top:0.500px;">填写请假单</div>
<div class="a t" style="top:673px;font-size:14px;line-height:20px;color:#111;left:367px;max-width:113px;overflow:hidden;height:20px;line-height:20px;margin-top:0.500px;">超级管理员</div>
<div class="a t" style="top:673px;font-size:14px;line-height:20px;color:#111;letter-spacing:0.237px;left:486px;max-width:78px;overflow:hidden;height:20px;line-height:20px;margin-top:0.500px;">2024-07-28</div>
<div class="a t" style="top:673px;font-size:14px;line-height:20px;color:#111;letter-spacing:0.237px;left:569px;max-width:79px;overflow:hidden;height:20px;line-height:20px;margin-top:0.500px;">2024-07-28</div>
<div class="a t" style="top:694px;font-size:14px;line-height:20px;color:#111;left:38px;max-width:229px;overflow:hidden;height:20px;line-height:20px;margin-top:0.500px;">会议申请</div>
<div class="a t" style="top:694px;font-size:14px;line-height:20px;color:#111;left:272px;max-width:90px;overflow:hidden;height:20px;line-height:20px;margin-top:0.500px;">填写会议申请</div>
<div class="a t" style="top:694px;font-size:14px;line-height:20px;color:#111;left:367px;max-width:113px;overflow:hidden;height:20px;line-height:20px;margin-top:0.500px;">超级管理员</div>
<div class="a t" style="top:694px;font-size:14px;line-height:20px;color:#111;letter-spacing:0.237px;left:486px;max-width:78px;overflow:hidden;height:20px;line-height:20px;margin-top:0.500px;">2024-07-28</div>
<div class="a t" style="top:694px;font-size:14px;line-height:20px;color:#111;letter-spacing:0.237px;left:569px;max-width:79px;overflow:hidden;height:20px;line-height:20px;margin-top:0.500px;">2024-07-28</div>
<div class="a t" style="top:715px;font-size:14px;line-height:20px;color:#111;left:38px;max-width:229px;overflow:hidden;height:20px;line-height:20px;margin-top:0.500px;">会议申请</div>
<div class="a t" style="top:715px;font-size:14px;line-height:20px;color:#111;left:272px;max-width:90px;overflow:hidden;height:20px;line-height:20px;margin-top:0.500px;">填写会议申请</div>
<div class="a t" style="top:715px;font-size:14px;line-height:20px;color:#111;left:367px;max-width:113px;overflow:hidden;height:20px;line-height:20px;margin-top:0.500px;">超级管理员</div>
<div class="a t" style="top:715px;font-size:14px;line-height:20px;color:#111;letter-spacing:0.237px;left:486px;max-width:78px;overflow:hidden;height:20px;line-height:20px;margin-top:0.500px;">2024-07-28</div>
<div class="a t" style="top:715px;font-size:14px;line-height:20px;color:#111;letter-spacing:0.237px;left:569px;max-width:79px;overflow:hidden;height:20px;line-height:20px;margin-top:0.500px;">2024-07-28</div>
<div class="a t" style="top:736px;font-size:14px;line-height:20px;color:#111;left:38px;max-width:229px;overflow:hidden;height:20px;line-height:20px;margin-top:0.500px;">测试</div>
<div class="a t" style="top:736px;font-size:14px;line-height:20px;color:#111;letter-spacing:0.068px;left:272px;max-width:90px;overflow:hidden;height:20px;line-height:20px;margin-top:0.500px;">启动1</div>
<div class="a t" style="top:736px;font-size:14px;line-height:20px;color:#111;left:367px;max-width:113px;overflow:hidden;height:20px;line-height:20px;margin-top:0.500px;">超级管理员</div>
<div class="a t" style="top:736px;font-size:14px;line-height:20px;color:#111;letter-spacing:0.237px;left:486px;max-width:78px;overflow:hidden;height:20px;line-height:20px;margin-top:0.500px;">2024-07-28</div>
<div class="a t" style="top:736px;font-size:14px;line-height:20px;color:#111;letter-spacing:0.237px;left:569px;max-width:79px;overflow:hidden;height:20px;line-height:20px;margin-top:0.500px;">2024-07-28</div>
<div class="a t" style="top:757px;font-size:14px;line-height:20px;color:#111;left:38px;max-width:229px;overflow:hidden;height:20px;line-height:20px;margin-top:0.500px;">测试</div>
<div class="a t" style="top:757px;font-size:14px;line-height:20px;color:#111;letter-spacing:0.068px;left:272px;max-width:90px;overflow:hidden;height:20px;line-height:20px;margin-top:0.500px;">启动2</div>
<div class="a t" style="top:757px;font-size:14px;line-height:20px;color:#111;left:367px;max-width:113px;overflow:hidden;height:20px;line-height:20px;margin-top:0.500px;">超级管理员</div>
<div class="a t" style="top:757px;font-size:14px;line-height:20px;color:#111;letter-spacing:0.237px;left:486px;max-width:78px;overflow:hidden;height:20px;line-height:20px;margin-top:0.500px;">2024-07-28</div>
<div class="a t" style="top:757px;font-size:14px;line-height:20px;color:#111;letter-spacing:0.237px;left:569px;max-width:79px;overflow:hidden;height:20px;line-height:20px;margin-top:0.500px;">2024-07-28</div>
<div class="a t" style="top:778px;font-size:14px;line-height:20px;color:#111;left:38px;max-width:229px;overflow:hidden;height:20px;line-height:20px;margin-top:0.500px;">员工请假流程</div>
<div class="a t" style="top:778px;font-size:14px;line-height:20px;color:#111;left:272px;max-width:90px;overflow:hidden;height:20px;line-height:20px;margin-top:0.500px;">填写请假单</div>
<div class="a t" style="top:778px;font-size:14px;line-height:20px;color:#111;left:367px;max-width:113px;overflow:hidden;height:20px;line-height:20px;margin-top:0.500px;">超级管理员</div>
<div class="a t" style="top:778px;font-size:14px;line-height:20px;color:#111;letter-spacing:0.237px;left:486px;max-width:78px;overflow:hidden;height:20px;line-height:20px;margin-top:0.500px;">2024-07-28</div>
<div class="a t" style="top:778px;font-size:14px;line-height:20px;color:#111;letter-spacing:0.237px;left:569px;max-width:79px;overflow:hidden;height:20px;line-height:20px;margin-top:0.500px;">2024-07-28</div>
<div class="a t" style="top:799px;font-size:14px;line-height:20px;color:#111;left:38px;max-width:229px;overflow:hidden;height:20px;line-height:20px;margin-top:0.500px;">测试</div>
<div class="a t" style="top:799px;font-size:14px;line-height:20px;color:#111;letter-spacing:0.068px;left:272px;max-width:90px;overflow:hidden;height:20px;line-height:20px;margin-top:0.500px;">启动1</div>
<div class="a t" style="top:799px;font-size:14px;line-height:20px;color:#111;left:367px;max-width:113px;overflow:hidden;height:20px;line-height:20px;margin-top:0.500px;">超级管理员</div>
<div class="a t" style="top:799px;font-size:14px;line-height:20px;color:#111;letter-spacing:0.237px;left:486px;max-width:78px;overflow:hidden;height:20px;line-height:20px;margin-top:0.500px;">2024-07-28</div>
<div class="a t" style="top:799px;font-size:14px;line-height:20px;color:#111;letter-spacing:0.237px;left:569px;max-width:79px;overflow:hidden;height:20px;line-height:20px;margin-top:0.500px;">2024-07-28</div>
<div class="a t" style="top:820px;font-size:14px;line-height:20px;color:#111;left:38px;max-width:229px;overflow:hidden;height:20px;line-height:20px;margin-top:0.500px;">员工请假流程</div>
<div class="a t" style="top:820px;font-size:14px;line-height:20px;color:#111;left:272px;max-width:90px;overflow:hidden;height:20px;line-height:20px;margin-top:0.500px;">填写请假单</div>
<div class="a t" style="top:820px;font-size:14px;line-height:20px;color:#111;left:367px;max-width:113px;overflow:hidden;height:20px;line-height:20px;margin-top:0.500px;">超级管理员</div>
<div class="a t" style="top:820px;font-size:14px;line-height:20px;color:#111;letter-spacing:0.237px;left:486px;max-width:78px;overflow:hidden;height:20px;line-height:20px;margin-top:0.500px;">2024-07-28</div>
<div class="a t" style="top:820px;font-size:14px;line-height:20px;color:#111;letter-spacing:0.237px;left:569px;max-width:79px;overflow:hidden;height:20px;line-height:20px;margin-top:0.500px;">2024-07-28</div>
<div class="a t" style="top:841px;font-size:14px;line-height:20px;color:#111;left:38px;max-width:229px;overflow:hidden;height:20px;line-height:20px;margin-top:0.500px;">员工请假流程</div>
<div class="a t" style="top:841px;font-size:14px;line-height:20px;color:#111;left:272px;max-width:90px;overflow:hidden;height:20px;line-height:20px;margin-top:0.500px;">填写请假单</div>
<div class="a t" style="top:841px;font-size:14px;line-height:20px;color:#111;left:367px;max-width:113px;overflow:hidden;height:20px;line-height:20px;margin-top:0.500px;">超级管理员</div>
<div class="a t" style="top:841px;font-size:14px;line-height:20px;color:#111;letter-spacing:0.237px;left:486px;max-width:78px;overflow:hidden;height:20px;line-height:20px;margin-top:0.500px;">2024-07-28</div>
<div class="a t" style="top:841px;font-size:14px;line-height:20px;color:#111;letter-spacing:0.237px;left:569px;max-width:79px;overflow:hidden;height:20px;line-height:20px;margin-top:0.500px;">2024-07-28</div>
<div class="a t" style="top:862px;font-size:14px;line-height:20px;color:#111;left:38px;max-width:229px;overflow:hidden;height:20px;line-height:20px;margin-top:0.500px;">员工请假流程</div>
<div class="a t" style="top:862px;font-size:14px;line-height:20px;color:#111;left:272px;max-width:90px;overflow:hidden;height:20px;line-height:20px;margin-top:0.500px;">填写请假单</div>
<div class="a t" style="top:862px;font-size:14px;line-height:20px;color:#111;letter-spacing:0.141px;left:367px;max-width:113px;overflow:hidden;height:20px;line-height:20px;margin-top:0.500px;">超级管理员,[撤...</div>
<div class="a t" style="top:862px;font-size:14px;line-height:20px;color:#111;letter-spacing:0.237px;left:486px;max-width:78px;overflow:hidden;height:20px;line-height:20px;margin-top:0.500px;">2024-07-28</div>
<div class="a t" style="top:862px;font-size:14px;line-height:20px;color:#111;letter-spacing:0.237px;left:569px;max-width:79px;overflow:hidden;height:20px;line-height:20px;margin-top:0.500px;">2024-07-28</div>
<div class="a t" style="top:883px;font-size:14px;line-height:20px;color:#111;letter-spacing:0.164px;left:38px;max-width:229px;overflow:hidden;height:20px;line-height:20px;margin-top:0.500px;">加班申请WF_20245429105405</div>
<div class="a t" style="top:883px;font-size:14px;line-height:20px;color:#111;left:272px;max-width:90px;overflow:hidden;height:20px;line-height:20px;margin-top:0.500px;">填写加班申请</div>
<div class="a t" style="top:883px;font-size:14px;line-height:20px;color:#111;left:367px;max-width:113px;overflow:hidden;height:20px;line-height:20px;margin-top:0.500px;">超级管理员</div>
<div class="a t" style="top:883px;font-size:14px;line-height:20px;color:#111;letter-spacing:0.237px;left:486px;max-width:78px;overflow:hidden;height:20px;line-height:20px;margin-top:0.500px;">2024-07-28</div>
<div class="a t" style="top:883px;font-size:14px;line-height:20px;color:#111;letter-spacing:0.237px;left:569px;max-width:79px;overflow:hidden;height:20px;line-height:20px;margin-top:0.500px;">2024-07-28</div>
<div class="a t" style="top:904px;font-size:14px;line-height:20px;color:#111;letter-spacing:0.149px;left:38px;max-width:229px;overflow:hidden;height:20px;line-height:20px;margin-top:0.500px;">员工请假流程WF_20245028045023</div>
<div class="a t" style="top:904px;font-size:14px;line-height:20px;color:#111;left:272px;max-width:90px;overflow:hidden;height:20px;line-height:20px;margin-top:0.500px;">填写请假单</div>
<div class="a t" style="top:904px;font-size:14px;line-height:20px;color:#111;left:367px;max-width:113px;overflow:hidden;height:20px;line-height:20px;margin-top:0.500px;">超级管理员</div>
<div class="a t" style="top:904px;font-size:14px;line-height:20px;color:#111;letter-spacing:0.237px;left:486px;max-width:78px;overflow:hidden;height:20px;line-height:20px;margin-top:0.500px;">2024-07-28</div>
<div class="a t" style="top:904px;font-size:14px;line-height:20px;color:#111;letter-spacing:0.237px;left:569px;max-width:79px;overflow:hidden;height:20px;line-height:20px;margin-top:0.500px;">2024-07-28</div>
<div class="a t" style="top:925px;font-size:14px;line-height:20px;color:#111;left:38px;max-width:229px;overflow:hidden;height:20px;line-height:20px;margin-top:0.500px;">测试</div>
<div class="a t" style="top:925px;font-size:14px;line-height:20px;color:#111;letter-spacing:0.068px;left:272px;max-width:90px;overflow:hidden;height:20px;line-height:20px;margin-top:0.500px;">启动1</div>
<div class="a t" style="top:925px;font-size:14px;line-height:20px;color:#111;left:367px;max-width:113px;overflow:hidden;height:20px;line-height:20px;margin-top:0.500px;">超级管理员</div>
<div class="a t" style="top:925px;font-size:14px;line-height:20px;color:#111;letter-spacing:0.237px;left:486px;max-width:78px;overflow:hidden;height:20px;line-height:20px;margin-top:0.500px;">2024-07-28</div>
<div class="a t" style="top:925px;font-size:14px;line-height:20px;color:#111;letter-spacing:0.237px;left:569px;max-width:79px;overflow:hidden;height:20px;line-height:20px;margin-top:0.500px;">2024-07-28</div>
<div class="a t" style="top:946px;font-size:14px;line-height:20px;color:#111;left:38px;max-width:229px;overflow:hidden;height:20px;line-height:20px;margin-top:0.500px;">会议申请</div>
<div class="a t" style="top:946px;font-size:14px;line-height:20px;color:#111;left:272px;max-width:90px;overflow:hidden;height:20px;line-height:20px;margin-top:0.500px;">填写会议申请</div>
<div class="a t" style="top:946px;font-size:14px;line-height:20px;color:#111;left:367px;max-width:113px;overflow:hidden;height:20px;line-height:20px;margin-top:0.500px;">超级管理员</div>
<div class="a t" style="top:946px;font-size:14px;line-height:20px;color:#111;letter-spacing:0.237px;left:486px;max-width:78px;overflow:hidden;height:20px;line-height:20px;margin-top:0.500px;">2024-07-28</div>
<div class="a t" style="top:946px;font-size:14px;line-height:20px;color:#111;letter-spacing:0.237px;left:569px;max-width:79px;overflow:hidden;height:20px;line-height:20px;margin-top:0.500px;">2024-07-28</div>
<div class="a t" style="top:967px;font-size:14px;line-height:20px;color:#111;left:38px;max-width:229px;overflow:hidden;height:20px;line-height:20px;margin-top:0.500px;">员工请假流程</div>
<div class="a t" style="top:967px;font-size:14px;line-height:20px;color:#111;left:272px;max-width:90px;overflow:hidden;height:20px;line-height:20px;margin-top:0.500px;">填写请假单</div>
<div class="a t" style="top:967px;font-size:14px;line-height:20px;color:#111;left:367px;max-width:113px;overflow:hidden;height:20px;line-height:20px;margin-top:0.500px;">超级管理员</div>
<div class="a t" style="top:967px;font-size:14px;line-height:20px;color:#111;letter-spacing:0.237px;left:486px;max-width:78px;overflow:hidden;height:20px;line-height:20px;margin-top:0.500px;">2024-07-28</div>
<div class="a t" style="top:967px;font-size:14px;line-height:20px;color:#111;letter-spacing:0.237px;left:569px;max-width:79px;overflow:hidden;height:20px;line-height:20px;margin-top:0.500px;">2024-07-28</div>
<div class="a t" style="top:988px;font-size:14px;line-height:20px;color:#111;letter-spacing:0.149px;left:38px;max-width:229px;overflow:hidden;height:20px;line-height:20px;margin-top:0.500px;">员工请假流程WF_20244720104740</div>
<div class="a t" style="top:988px;font-size:14px;line-height:20px;color:#111;left:272px;max-width:90px;overflow:hidden;height:20px;line-height:20px;margin-top:0.500px;">填写请假单</div>
<div class="a t" style="top:988px;font-size:14px;line-height:20px;color:#111;left:367px;max-width:113px;overflow:hidden;height:20px;line-height:20px;margin-top:0.500px;">超级管理员</div>
<div class="a t" style="top:988px;font-size:14px;line-height:20px;color:#111;letter-spacing:0.237px;left:486px;max-width:78px;overflow:hidden;height:20px;line-height:20px;margin-top:0.500px;">2024-07-20</div>
<div class="a t" style="top:988px;font-size:14px;line-height:20px;color:#111;letter-spacing:0.237px;left:569px;max-width:79px;overflow:hidden;height:20px;line-height:20px;margin-top:0.500px;">2024-07-20</div>
<div class="a t" style="top:1009px;font-size:14px;line-height:20px;color:#111;letter-spacing:0.149px;left:38px;max-width:229px;overflow:hidden;height:20px;line-height:20px;margin-top:0.500px;">员工请假流程WF_20244120104157</div>
<div class="a t" style="top:1009px;font-size:14px;line-height:20px;color:#111;left:272px;max-width:90px;overflow:hidden;height:20px;line-height:20px;margin-top:0.500px;">填写请假单</div>
<div class="a t" style="top:1009px;font-size:14px;line-height:20px;color:#111;left:367px;max-width:113px;overflow:hidden;height:20px;line-height:20px;margin-top:0.500px;">超级管理员</div>
<div class="a t" style="top:1009px;font-size:14px;line-height:20px;color:#111;letter-spacing:0.237px;left:486px;max-width:78px;overflow:hidden;height:20px;line-height:20px;margin-top:0.500px;">2024-07-20</div>
<div class="a t" style="top:1009px;font-size:14px;line-height:20px;color:#111;letter-spacing:0.237px;left:569px;max-width:79px;overflow:hidden;height:20px;line-height:20px;margin-top:0.500px;">2024-07-20</div>
</div></div>
<div class="a" style="left:807px;top:628px;width:18px;height:398px;background:#cdd3e6;"></div>
<svg class="a" style="left:811px;top:1016px" width="10" height="5" viewBox="0 0 10 5"><path d="M0 0h10l-5.0 5z" fill="#65738f"/></svg>
<div class="a" style="left:833px;top:601px;width:814px;height:427px;background:#e4e7f1;border:1px solid #98a5ba;box-sizing:border-box;"></div>
<div class="a" style="left:835px;top:603px;width:810px;height:423px;background:#fff;border:1px solid #98a5ba;box-sizing:border-box;"></div>
<div class="a" style="left:835px;top:603px;width:810px;height:25px;background:#6b8e23;"></div>
<div class="a t" style="top:605.5px;font-size:14.5px;line-height:20px;color:#fff;font-family:'Liberation Serif','Noto Serif CJK SC',serif;font-weight:bold;letter-spacing:1.134px;left:1536px;">Refresh</div>
<div class="a t" style="top:605.5px;font-size:14.5px;line-height:20px;color:#fff;font-family:'Liberation Serif','Noto Serif CJK SC',serif;font-weight:bold;letter-spacing:-0.346px;left:1585.5px;background:#6b8e23;line-height:16px;margin-top:2px;">More&gt;&gt;</div>
<div class="a" style="left:836px;top:628px;width:808px;height:1px;background:#a3b0cc;"></div>
<div class="a" style="left:866px;top:639px;width:702px;height:359px;background:#fff;border:1px solid #8e9bb5;box-sizing:border-box;"></div>
<div class="a" style="left:867px;top:962px;width:700px;height:1px;background:#cfcfcf;"></div>
<div class="a" style="left:867px;top:926px;width:700px;height:1px;background:#cfcfcf;"></div>
<div class="a" style="left:867px;top:891px;width:700px;height:1px;background:#cfcfcf;"></div>
<div class="a" style="left:867px;top:856px;width:700px;height:1px;background:#cfcfcf;"></div>
<div class="a" style="left:867px;top:820px;width:700px;height:1px;background:#cfcfcf;"></div>
<div class="a" style="left:867px;top:785px;width:700px;height:1px;background:#cfcfcf;"></div>
<div class="a" style="left:867px;top:750px;width:700px;height:1px;background:#cfcfcf;"></div>
<div class="a" style="left:867px;top:714px;width:700px;height:1px;background:#cfcfcf;"></div>
<div class="a" style="left:867px;top:679px;width:700px;height:1px;background:#cfcfcf;"></div>
<div class="a" style="left:867px;top:643px;width:700px;height:1px;background:#cfcfcf;"></div>
<div class="a" style="left:913px;top:962px;width:140px;height:36px;background:#8fb2e6;border:1px solid #7c9fd4;box-sizing:border-box;"></div>
<div class="a" style="left:1147px;top:955px;width:140px;height:43px;background:#8fb2e6;border:1px solid #7c9fd4;box-sizing:border-box;"></div>
<div class="a" style="left:1381px;top:672px;width:140px;height:326px;background:#8fb2e6;border:1px solid #7c9fd4;box-sizing:border-box;"></div>
<div class="a" style="left:866px;top:639px;width:1px;height:359px;background:#8a96b4;"></div>
<div class="a" style="left:862px;top:997px;width:706px;height:1px;background:#8a96b4;"></div>
<div class="a" style="left:861px;top:997px;width:5px;height:1px;background:#8a96b4;"></div>
<div class="a" style="left:861px;top:962px;width:5px;height:1px;background:#8a96b4;"></div>
<div class="a" style="left:861px;top:926px;width:5px;height:1px;background:#8a96b4;"></div>
<div class="a" style="left:861px;top:891px;width:5px;height:1px;background:#8a96b4;"></div>
<div class="a" style="left:861px;top:856px;width:5px;height:1px;background:#8a96b4;"></div>
<div class="a" style="left:861px;top:820px;width:5px;height:1px;background:#8a96b4;"></div>
<div class="a" style="left:861px;top:785px;width:5px;height:1px;background:#8a96b4;"></div>
<div class="a" style="left:861px;top:750px;width:5px;height:1px;background:#8a96b4;"></div>
<div class="a" style="left:861px;top:714px;width:5px;height:1px;background:#8a96b4;"></div>
<div class="a" style="left:861px;top:679px;width:5px;height:1px;background:#8a96b4;"></div>
<div class="a" style="left:861px;top:643px;width:5px;height:1px;background:#8a96b4;"></div>
<div class="a" style="left:864px;top:985px;width:2px;height:1px;background:#8a96b4;"></div>
<div class="a" style="left:864px;top:973px;width:2px;height:1px;background:#8a96b4;"></div>
<div class="a" style="left:864px;top:950px;width:2px;height:1px;background:#8a96b4;"></div>
<div class="a" style="left:864px;top:938px;width:2px;height:1px;background:#8a96b4;"></div>
<div class="a" style="left:864px;top:915px;width:2px;height:1px;background:#8a96b4;"></div>
<div class="a" style="left:864px;top:903px;width:2px;height:1px;background:#8a96b4;"></div>
<div class="a" style="left:864px;top:879px;width:2px;height:1px;background:#8a96b4;"></div>
<div class="a" style="left:864px;top:867px;width:2px;height:1px;background:#8a96b4;"></div>
<div class="a" style="left:864px;top:844px;width:2px;height:1px;background:#8a96b4;"></div>
<div class="a" style="left:864px;top:832px;width:2px;height:1px;background:#8a96b4;"></div>
<div class="a" style="left:864px;top:809px;width:2px;height:1px;background:#8a96b4;"></div>
<div class="a" style="left:864px;top:797px;width:2px;height:1px;background:#8a96b4;"></div>
<div class="a" style="left:864px;top:773px;width:2px;height:1px;background:#8a96b4;"></div>
<div class="a" style="left:864px;top:761px;width:2px;height:1px;background:#8a96b4;"></div>
<div class="a" style="left:864px;top:738px;width:2px;height:1px;background:#8a96b4;"></div>
<div class="a" style="left:864px;top:726px;width:2px;height:1px;background:#8a96b4;"></div>
<div class="a" style="left:864px;top:703px;width:2px;height:1px;background:#8a96b4;"></div>
<div class="a" style="left:864px;top:691px;width:2px;height:1px;background:#8a96b4;"></div>
<div class="a" style="left:864px;top:667px;width:2px;height:1px;background:#8a96b4;"></div>
<div class="a" style="left:864px;top:655px;width:2px;height:1px;background:#8a96b4;"></div>
<div class="a t" style="top:952px;font-size:11px;line-height:20px;color:#1e2440;right:805px;">5</div>
<div class="a t" style="top:987px;font-size:11px;line-height:20px;color:#1e2440;right:805px;">0</div>
<div class="a" style="left:890px;top:997px;width:1px;height:3px;background:#8a96b4;"></div>
<div class="a" style="left:936px;top:997px;width:1px;height:3px;background:#8a96b4;"></div>
<div class="a" style="left:983px;top:997px;width:1px;height:6px;background:#8a96b4;"></div>
<div class="a" style="left:1030px;top:997px;width:1px;height:3px;background:#8a96b4;"></div>
<div class="a" style="left:1077px;top:997px;width:1px;height:3px;background:#8a96b4;"></div>
<div class="a" style="left:1123px;top:997px;width:1px;height:3px;background:#8a96b4;"></div>
<div class="a" style="left:1170px;top:997px;width:1px;height:3px;background:#8a96b4;"></div>
<div class="a" style="left:1217px;top:997px;width:1px;height:6px;background:#8a96b4;"></div>
<div class="a" style="left:1263px;top:997px;width:1px;height:3px;background:#8a96b4;"></div>
<div class="a" style="left:1310px;top:997px;width:1px;height:3px;background:#8a96b4;"></div>
<div class="a" style="left:1357px;top:997px;width:1px;height:3px;background:#8a96b4;"></div>
<div class="a" style="left:1404px;top:997px;width:1px;height:3px;background:#8a96b4;"></div>
<div class="a" style="left:1450px;top:997px;width:1px;height:6px;background:#8a96b4;"></div>
<div class="a" style="left:1497px;top:997px;width:1px;height:3px;background:#8a96b4;"></div>
<div class="a" style="left:1544px;top:997px;width:1px;height:3px;background:#8a96b4;"></div>
<div class="a t" style="top:1004px;font-size:12px;line-height:20px;color:#222;left:683px;width:600px;text-align:center;">未认领任务</div>
<div class="a t" style="top:1004px;font-size:12px;line-height:20px;color:#222;left:916px;width:600px;text-align:center;">待办任务</div>
<div class="a t" style="top:1004px;font-size:12px;line-height:20px;color:#222;left:1150px;width:600px;text-align:center;">已完成任务</div>
<div class="a" style="left:1578px;top:639px;width:56px;height:22px;background:#fff;border:1px solid #a8b4d0;box-sizing:border-box;"></div>
<div class="a" style="left:1582px;top:643px;width:18px;height:14px;background:#8fb2e6;border:1px solid #7c9fd4;box-sizing:border-box;"></div>
<div class="a t" style="top:640px;font-size:12px;line-height:20px;color:#222;left:1604px;">数量</div>
<div class="a" style="left:497px;top:280px;width:765px;height:673px;background:#d6dbe9;border:1px solid #4a4a4a;box-sizing:border-box;"></div>
<svg class="a" style="left:507.0px;top:292.0px" width="16" height="16" viewBox="0 0 16 16"><defs><linearGradient id="rg515" x1="0" y1="0" x2="0" y2="1"><stop offset="0" stop-color="#3aa0f0"/><stop offset="1" stop-color="#0a62c8"/></linearGradient></defs><circle cx="8" cy="8" r="8" fill="url(#rg515)"/><text x="8.300" y="12.300" font-family="Liberation Sans,sans-serif" font-weight="bold" font-size="12.500" text-anchor="middle" fill="#fff" stroke="#fff" stroke-width=".5">R</text></svg>
<div class="a t" style="top:290.5px;font-size:17.5px;line-height:20px;color:#8b96b0;letter-spacing:-0.594px;left:527px;">Option</div>
<div class="a" style="left:1193px;top:300px;width:10px;height:3px;background:#111;"></div>
<svg class="a" style="left:1231px;top:296px" width="10" height="8" viewBox="0 0 10 8"><path d="M1 0.500L9 7.500M9 0.500L1 7.500" stroke="#111" stroke-width="2"/></svg>
<div class="a" style="left:504px;top:319px;width:751px;height:627px;background:#f0f0f0;border:1px solid #9ea9bf;box-sizing:border-box;"></div>
<svg class="a" style="left:518px;top:331px;overflow:hidden" width="723" height="69" viewBox="0 0 723 69"><defs><linearGradient id="bn" x1="0" y1="0" x2="1" y2="0"><stop offset="0" stop-color="#092a58"/><stop offset=".35" stop-color="#0a4c8c"/><stop offset=".7" stop-color="#0a68ac"/><stop offset="1" stop-color="#0b6cb0"/></linearGradient><filter id="bl" x="-5%" y="-30%" width="110%" height="160%"><feGaussianBlur stdDeviation="0.350 0.700"/></filter><filter id="gl" x="-5%" y="-40%" width="110%" height="180%"><feGaussianBlur stdDeviation="1.300 2.600"/></filter></defs><rect width="723" height="69" fill="url(#bn)"/><path d="M122 -5L-59 5" stroke="#7fc4ee" stroke-opacity="0.29" stroke-width="0.8"/><path d="M380 -5L232 74" stroke="#7fc4ee" stroke-opacity="0.36" stroke-width="0.8"/><path d="M6 -5L40 44" stroke="#7fc4ee" stroke-opacity="0.68" stroke-width="0.8"/><path d="M155 -5L402 74" stroke="#7fc4ee" stroke-opacity="0.38" stroke-width="0.6"/><path d="M32 -5L-68 7" stroke="#7fc4ee" stroke-opacity="0.54" stroke-width="0.7"/><path d="M221 -5L-6 -5" stroke="#7fc4ee" stroke-opacity="0.56" stroke-width="0.8"/><path d="M118 74L163 74" stroke="#7fc4ee" stroke-opacity="0.61" stroke-width="0.9"/><path d="M87 74L126 60" stroke="#7fc4ee" stroke-opacity="0.45" stroke-width="0.9"/><path d="M12 -5L18 74" stroke="#7fc4ee" stroke-opacity="0.67" stroke-width="0.8"/><path d="M403 74L184 -5" stroke="#7fc4ee" stroke-opacity="0.52" stroke-width="0.8"/><path d="M181 74L358 33" stroke="#7fc4ee" stroke-opacity="0.28" stroke-width="0.9"/><path d="M116 74L157 -5" stroke="#7fc4ee" stroke-opacity="0.65" stroke-width="0.7"/><path d="M394 -5L319 74" stroke="#7fc4ee" stroke-opacity="0.60" stroke-width="0.6"/><path d="M89 74L32 -5" stroke="#7fc4ee" stroke-opacity="0.43" stroke-width="0.7"/><path d="M40 74L4 -5" stroke="#7fc4ee" stroke-opacity="0.56" stroke-width="0.7"/><path d="M82 -5L-135 74" stroke="#7fc4ee" stroke-opacity="0.26" stroke-width="1.0"/><path d="M60 -5L-53 -5" stroke="#7fc4ee" stroke-opacity="0.52" stroke-width="0.7"/><path d="M35 -5L222 32" stroke="#7fc4ee" stroke-opacity="0.61" stroke-width="0.7"/><path d="M156 74L-51 74" stroke="#7fc4ee" stroke-opacity="0.69" stroke-width="0.8"/><path d="M28 -5L81 74" stroke="#7fc4ee" stroke-opacity="0.49" stroke-width="1.1"/><path d="M250 -5L27 74" stroke="#7fc4ee" stroke-opacity="0.54" stroke-width="1.1"/><path d="M245 -5L232 -5" stroke="#7fc4ee" stroke-opacity="0.47" stroke-width="0.7"/><path d="M43 74L173 33" stroke="#7fc4ee" stroke-opacity="0.32" stroke-width="0.5"/><path d="M398 -5L413 74" stroke="#7fc4ee" stroke-opacity="0.59" stroke-width="0.7"/><path d="M263 74L50 74" stroke="#7fc4ee" stroke-opacity="0.41" stroke-width="0.6"/><path d="M218 -5L220 74" stroke="#7fc4ee" stroke-opacity="0.61" stroke-width="1.0"/><path d="M306 74L163 74" stroke="#7fc4ee" stroke-opacity="0.70" stroke-width="1.0"/><path d="M188 74L28 31" stroke="#7fc4ee" stroke-opacity="0.69" stroke-width="1.1"/><path d="M140 -5L-5 -5" stroke="#7fc4ee" stroke-opacity="0.34" stroke-width="0.9"/><path d="M376 74L553 -5" stroke="#7fc4ee" stroke-opacity="0.61" stroke-width="0.6"/><path d="M271 -5L484 74" stroke="#7fc4ee" stroke-opacity="0.45" stroke-width="0.9"/><path d="M18 74L250 32" stroke="#7fc4ee" stroke-opacity="0.68" stroke-width="0.9"/><path d="M55 -5L-139 -5" stroke="#7fc4ee" stroke-opacity="0.61" stroke-width="0.6"/><path d="M344 74L593 11" stroke="#7fc4ee" stroke-opacity="0.31" stroke-width="0.5"/><path d="M407 -5L485 74" stroke="#7fc4ee" stroke-opacity="0.62" stroke-width="0.6"/><path d="M91 -5L-17 -5" stroke="#7fc4ee" stroke-opacity="0.37" stroke-width="0.8"/><path d="M38 74L251 62" stroke="#7fc4ee" stroke-opacity="0.51" stroke-width="1.0"/><path d="M165 -5L382 37" stroke="#7fc4ee" stroke-opacity="0.48" stroke-width="1.0"/><path d="M628 -5L694 74" stroke="#8fd0f4" stroke-opacity=".25" stroke-width=".8"/><path d="M628 -5L418 74" stroke="#8fd0f4" stroke-opacity=".25" stroke-width=".8"/><path d="M360 -5L431 74" stroke="#8fd0f4" stroke-opacity=".25" stroke-width=".8"/><path d="M351 -5L88 74" stroke="#8fd0f4" stroke-opacity=".25" stroke-width=".8"/><path d="M589 -5L607 74" stroke="#8fd0f4" stroke-opacity=".25" stroke-width=".8"/><path d="M504 -5L670 74" stroke="#8fd0f4" stroke-opacity=".25" stroke-width=".8"/><circle cx="60" cy="44" r="8" fill="#9fd4f4" fill-opacity="0.45"/><circle cx="175" cy="62" r="7" fill="#9fd4f4" fill-opacity="0.4"/><circle cx="20" cy="68" r="7" fill="#9fd4f4" fill-opacity="0.35"/><circle cx="290" cy="10" r="5" fill="#9fd4f4" fill-opacity="0.4"/><circle cx="138" cy="5" r="4" fill="#9fd4f4" fill-opacity="0.3"/><circle cx="560" cy="68" r="9" fill="#9fd4f4" fill-opacity="0.45"/><circle cx="330" cy="66" r="3" fill="#9fd4f4" fill-opacity="0.6"/><circle cx="158" cy="72" r="3" fill="#9fd4f4" fill-opacity="0.6"/><circle cx="150" cy="20" r="2" fill="#9fd4f4" fill-opacity="0.7"/><circle cx="205" cy="33" r="2" fill="#9fd4f4" fill-opacity="0.7"/><g transform="translate(71 31) scale(2.15 1.04)"><text x="0" y="0" font-family="Liberation Sans,sans-serif" font-weight="bold" font-size="31" fill="#efe8a8" fill-opacity=".8" filter="url(#gl)" stroke="#efe8a8" stroke-width="1.500" textLength="270" lengthAdjust="spacingAndGlyphs">RDIFramework.NET</text><text x="0" y="0" font-family="Liberation Sans,sans-serif" font-weight="bold" font-size="31" fill="#fff" filter="url(#bl)" textLength="270" lengthAdjust="spacingAndGlyphs">RDIFramework.NET</text></g><g transform="translate(28 56.500) scale(1.55 1)"><text x="2" y="2.500" font-family="Noto Sans CJK SC,sans-serif" font-weight="900" font-size="19" fill="#061830" fill-opacity=".9" textLength="424" lengthAdjust="spacingAndGlyphs">企业级.NET快速开发平台(十年专业、精益求精)</text><text x="0" y="0" font-family="Noto Sans CJK SC,sans-serif" font-weight="900" font-size="19" fill="#fff" textLength="424" lengthAdjust="spacingAndGlyphs">企业级.NET快速开发平台(十年专业、精益求精)</text></g></svg>
<div class="a" style="left:518px;top:433px;width:723px;height:475px;background:#d6dbe9;border:1px solid #9ea9bf;box-sizing:border-box;"></div>
<div class="a" style="left:519px;top:404px;width:95px;height:30px;background:#cfd5e6;border:1px solid #9ea9bf;box-sizing:border-box;"></div>
<div class="a t" style="top:407.5px;font-size:14px;line-height:20px;color:#1c2340;letter-spacing:-0.439px;left:530px;">ClientConfig</div>
<div class="a" style="left:613px;top:404px;width:102px;height:30px;background:#d6dbe9;border:1px solid #9ea9bf;box-sizing:border-box;border-bottom:none;"></div>
<div class="a t" style="top:407.5px;font-size:14px;line-height:20px;color:#1c2340;letter-spacing:-0.225px;left:624px;">ServerConfig</div>
<div class="a" style="left:714px;top:404px;width:147px;height:30px;background:#cfd5e6;border:1px solid #9ea9bf;box-sizing:border-box;"></div>
<div class="a t" style="top:407.5px;font-size:14px;line-height:20px;color:#1c2340;letter-spacing:-0.287px;left:725px;">SysParameterConfig</div>
<div class="a" style="left:860px;top:404px;width:134px;height:30px;background:#cfd5e6;border:1px solid #9ea9bf;box-sizing:border-box;"></div>
<div class="a t" style="top:407.5px;font-size:14px;line-height:20px;color:#1c2340;letter-spacing:-0.095px;left:871px;">ErrorReportConfig</div>
<div class="a" style="left:530px;top:444px;width:699px;height:26px;background:#f0f0f0;"></div>
<div class="a t" style="top:445px;font-size:15px;line-height:20px;color:#0000ff;font-family:'Liberation Mono','Noto Sans CJK SC',monospace;letter-spacing:-0.002px;left:533px;transform:scaleY(1.12);text-shadow:0.700px 0 0 #0000ff;">Here is mainly to configure the server, generally only open to super</div>
<div class="a" style="left:531px;top:478px;width:13px;height:13px;background:#fff;border:1px solid #a2abc2;box-sizing:border-box;"></div>
<div class="a t" style="top:475px;font-size:14px;line-height:20px;color:#1c2340;letter-spacing:-0.353px;left:548px;">AllowUserToRegister.</div>
<div class="a" style="left:531px;top:503px;width:13px;height:13px;background:#fff;border:1px solid #a2abc2;box-sizing:border-box;"></div>
<svg class="a" style="left:533px;top:505px" width="9" height="9" viewBox="0 0 9 9"><path d="M0.800 4.600L3.400 7.400 8.400 1" fill="none" stroke="#4f5c78" stroke-width="1.500"/></svg>
<div class="a t" style="top:500px;font-size:14px;line-height:20px;color:#1c2340;letter-spacing:-0.415px;left:548px;">EnableCheckIPAddress.</div>
<div class="a" style="left:531px;top:528px;width:13px;height:13px;background:#fff;border:1px solid #a2abc2;box-sizing:border-box;"></div>
<svg class="a" style="left:533px;top:530px" width="9" height="9" viewBox="0 0 9 9"><path d="M0.800 4.600L3.400 7.400 8.400 1" fill="none" stroke="#4f5c78" stroke-width="1.500"/></svg>
<div class="a t" style="top:525px;font-size:14px;line-height:20px;color:#1c2340;letter-spacing:-0.365px;left:548px;">EnableUserAuthorization.</div>
<div class="a" style="left:531px;top:553px;width:13px;height:13px;background:#fff;border:1px solid #a2abc2;box-sizing:border-box;"></div>
<svg class="a" style="left:533px;top:555px" width="9" height="9" viewBox="0 0 9 9"><path d="M0.800 4.600L3.400 7.400 8.400 1" fill="none" stroke="#4f5c78" stroke-width="1.500"/></svg>
<div class="a t" style="top:550px;font-size:14px;line-height:20px;color:#1c2340;letter-spacing:-0.474px;left:548px;">EnablePermissionScope.</div>
<div class="a" style="left:531px;top:578px;width:13px;height:13px;background:#fff;border:1px solid #a2abc2;box-sizing:border-box;"></div>
<svg class="a" style="left:533px;top:580px" width="9" height="9" viewBox="0 0 9 9"><path d="M0.800 4.600L3.400 7.400 8.400 1" fill="none" stroke="#4f5c78" stroke-width="1.500"/></svg>
<div class="a t" style="top:575px;font-size:14px;line-height:20px;color:#1c2340;letter-spacing:-0.387px;left:548px;">EnableTableColumnScope.</div>
<div class="a" style="left:531px;top:603px;width:13px;height:13px;background:#fff;border:1px solid #a2abc2;box-sizing:border-box;"></div>
<div class="a t" style="top:600px;font-size:14px;line-height:20px;color:#1c2340;letter-spacing:-0.432px;left:548px;">EnableCheckPassword.</div>
<div class="a" style="left:531px;top:628px;width:13px;height:13px;background:#fff;border:1px solid #a2abc2;box-sizing:border-box;"></div>
<div class="a t" style="top:625px;font-size:14px;line-height:20px;color:#1c2340;letter-spacing:-0.393px;left:548px;">CheckOnLine.</div>
<div class="a" style="left:882px;top:478px;width:13px;height:13px;background:#fff;border:1px solid #a2abc2;box-sizing:border-box;"></div>
<svg class="a" style="left:884px;top:480px" width="9" height="9" viewBox="0 0 9 9"><path d="M0.800 4.600L3.400 7.400 8.400 1" fill="none" stroke="#4f5c78" stroke-width="1.500"/></svg>
<div class="a t" style="top:475px;font-size:14px;line-height:20px;color:#1c2340;letter-spacing:-0.312px;left:899px;">EnableRecordLog.</div>
<div class="a" style="left:882px;top:503px;width:13px;height:13px;background:#fff;border:1px solid #a2abc2;box-sizing:border-box;"></div>
<svg class="a" style="left:884px;top:505px" width="9" height="9" viewBox="0 0 9 9"><path d="M0.800 4.600L3.400 7.400 8.400 1" fill="none" stroke="#4f5c78" stroke-width="1.500"/></svg>
<div class="a t" style="top:500px;font-size:14px;line-height:20px;color:#1c2340;letter-spacing:-0.327px;left:899px;">EnableUserAuthorizationScope.</div>
<div class="a" style="left:882px;top:528px;width:13px;height:13px;background:#fff;border:1px solid #a2abc2;box-sizing:border-box;"></div>
<svg class="a" style="left:884px;top:530px" width="9" height="9" viewBox="0 0 9 9"><path d="M0.800 4.600L3.400 7.400 8.400 1" fill="none" stroke="#4f5c78" stroke-width="1.500"/></svg>
<div class="a t" style="top:525px;font-size:14px;line-height:20px;color:#1c2340;letter-spacing:-0.314px;left:899px;">EnableModuleConstraint.</div>
<div class="a t" style="top:651px;font-size:14px;line-height:20px;color:#1c2340;letter-spacing:-0.299px;left:530px;">OnLineLimit:</div>
<div class="a" style="left:740px;top:649px;width:489px;height:24px;background:#fff;border:1px solid #9ea9bf;box-sizing:border-box;"></div>
<div class="a t" style="top:650.5px;font-size:14px;line-height:20px;color:#1c2340;right:451px;">300</div>
<svg class="a" style="left:1217px;top:653px" width="8" height="4" viewBox="0 0 8 4"><path d="M0 4h8l-4.0 -4z" fill="#4a5670"/></svg>
<svg class="a" style="left:1217px;top:664px" width="8" height="4" viewBox="0 0 8 4"><path d="M0 0h8l-4.0 4z" fill="#4a5670"/></svg>
<div class="a t" style="top:679px;font-size:14px;line-height:20px;color:#1c2340;letter-spacing:-0.261px;left:530px;">OnLineTime0ut(Minute):</div>
<div class="a" style="left:740px;top:677px;width:489px;height:24px;background:#fff;border:1px solid #9ea9bf;box-sizing:border-box;"></div>
<div class="a t" style="top:678.5px;font-size:14px;line-height:20px;color:#1c2340;right:451px;">120</div>
<svg class="a" style="left:1217px;top:681px" width="8" height="4" viewBox="0 0 8 4"><path d="M0 4h8l-4.0 -4z" fill="#4a5670"/></svg>
<svg class="a" style="left:1217px;top:692px" width="8" height="4" viewBox="0 0 8 4"><path d="M0 0h8l-4.0 4z" fill="#4a5670"/></svg>
<div class="a t" style="top:707px;font-size:14px;line-height:20px;color:#1c2340;letter-spacing:-0.099px;left:530px;">AccountMinimumLength:</div>
<div class="a" style="left:740px;top:705px;width:489px;height:24px;background:#fff;border:1px solid #9ea9bf;box-sizing:border-box;"></div>
<div class="a t" style="top:706.5px;font-size:14px;line-height:20px;color:#1c2340;right:451px;">4</div>
<svg class="a" style="left:1217px;top:709px" width="8" height="4" viewBox="0 0 8 4"><path d="M0 4h8l-4.0 -4z" fill="#4a5670"/></svg>
<svg class="a" style="left:1217px;top:720px" width="8" height="4" viewBox="0 0 8 4"><path d="M0 0h8l-4.0 4z" fill="#4a5670"/></svg>
<div class="a t" style="top:735px;font-size:14px;line-height:20px;color:#1c2340;letter-spacing:-0.209px;left:530px;">PasswordChangeCycle(Month):</div>
<div class="a" style="left:740px;top:733px;width:489px;height:24px;background:#fff;border:1px solid #9ea9bf;box-sizing:border-box;"></div>
<div class="a t" style="top:734.5px;font-size:14px;line-height:20px;color:#1c2340;right:451px;">3</div>
<svg class="a" style="left:1217px;top:737px" width="8" height="4" viewBox="0 0 8 4"><path d="M0 4h8l-4.0 -4z" fill="#4a5670"/></svg>
<svg class="a" style="left:1217px;top:748px" width="8" height="4" viewBox="0 0 8 4"><path d="M0 0h8l-4.0 4z" fill="#4a5670"/></svg>
<div class="a t" style="top:763px;font-size:14px;line-height:20px;color:#1c2340;letter-spacing:-0.244px;left:530px;">PasswordErrorLockLimit:</div>
<div class="a" style="left:740px;top:761px;width:489px;height:24px;background:#fff;border:1px solid #9ea9bf;box-sizing:border-box;"></div>
<div class="a t" style="top:762.5px;font-size:14px;line-height:20px;color:#1c2340;right:451px;">5</div>
<svg class="a" style="left:1217px;top:765px" width="8" height="4" viewBox="0 0 8 4"><path d="M0 4h8l-4.0 -4z" fill="#4a5670"/></svg>
<svg class="a" style="left:1217px;top:776px" width="8" height="4" viewBox="0 0 8 4"><path d="M0 0h8l-4.0 4z" fill="#4a5670"/></svg>
<div class="a t" style="top:791px;font-size:14px;line-height:20px;color:#1c2340;letter-spacing:-0.239px;left:530px;">PasswordErrorLockCycle(Minute):</div>
<div class="a" style="left:740px;top:789px;width:489px;height:24px;background:#fff;border:1px solid #9ea9bf;box-sizing:border-box;"></div>
<div class="a t" style="top:790.5px;font-size:14px;line-height:20px;color:#1c2340;right:451px;">30</div>
<svg class="a" style="left:1217px;top:793px" width="8" height="4" viewBox="0 0 8 4"><path d="M0 4h8l-4.0 -4z" fill="#4a5670"/></svg>
<svg class="a" style="left:1217px;top:804px" width="8" height="4" viewBox="0 0 8 4"><path d="M0 0h8l-4.0 4z" fill="#4a5670"/></svg>
<div class="a t" style="top:819px;font-size:14px;line-height:20px;color:#1c2340;letter-spacing:-0.295px;left:530px;">DefaultPassword:</div>
<div class="a" style="left:740px;top:817px;width:137px;height:24px;background:#fff;border:1px solid #9ea9bf;box-sizing:border-box;"></div>
<div class="a t" style="top:819.5px;font-size:14px;line-height:20px;color:#1c2340;letter-spacing:0.061px;left:744px;">abcd1234</div>
<div class="a t" style="top:819px;font-size:14px;line-height:20px;color:#1c2340;letter-spacing:-0.361px;left:881px;">PasswordMiniLength:</div>
<div class="a" style="left:1091px;top:817px;width:138px;height:24px;background:#fff;border:1px solid #9ea9bf;box-sizing:border-box;"></div>
<div class="a t" style="top:818.5px;font-size:14px;line-height:20px;color:#1c2340;right:451px;">6</div>
<svg class="a" style="left:1217px;top:821px" width="8" height="4" viewBox="0 0 8 4"><path d="M0 4h8l-4.0 -4z" fill="#4a5670"/></svg>
<svg class="a" style="left:1217px;top:832px" width="8" height="4" viewBox="0 0 8 4"><path d="M0 0h8l-4.0 4z" fill="#4a5670"/></svg>
<div class="a" style="left:1041px;top:912px;width:99px;height:22px;background:#fff3c0;border:1px solid #e5c365;box-sizing:border-box;"></div>
<div class="a t" style="top:913px;font-size:14px;line-height:20px;color:#1c2340;letter-spacing:-0.440px;left:1066.5px;">Save(S)</div>
<div class="a" style="left:1144px;top:912px;width:97px;height:22px;background:#cfd5e6;border:1px solid #9ea9bf;box-sizing:border-box;"></div>
<div class="a t" style="top:913px;font-size:14px;line-height:20px;color:#1c2340;letter-spacing:-0.468px;left:1163.3px;">Cancel(C)</div>
<div class="a" style="left:629px;top:531px;width:500px;height:171px;background:#c6cbe1;border:1px solid #1b2740;box-sizing:border-box;"></div>
<div class="a t" style="top:541.5px;font-size:16px;line-height:20px;color:#1e2b4a;letter-spacing:0.152px;left:637px;">Notice Messsage</div>
<svg class="a" style="left:1098px;top:547px" width="9" height="8" viewBox="0 0 9 8"><path d="M0.700 0.500L8.300 7.500M8.300 0.500L0.700 7.500" stroke="#7f8aa5" stroke-width="1.400"/></svg>
<div class="a" style="left:636px;top:570px;width:486px;height:125px;background:#d6dbe9;border:1px solid #a7afc6;box-sizing:border-box;"></div>
<svg class="a" style="left:669px;top:599px" width="32" height="32" viewBox="0 0 32 32"><defs><linearGradient id="qq" x1="0.2" y1="0" x2="0.8" y2="1"><stop offset="0" stop-color="#1f9be6"/><stop offset="1" stop-color="#0868cc"/></linearGradient></defs><circle cx="16" cy="16" r="16" fill="url(#qq)"/><text x="16" y="24.500" font-family="Liberation Sans,sans-serif" font-size="23.500" text-anchor="middle" fill="#fff">?</text></svg>
<div class="a t" style="top:605.5px;font-size:14px;line-height:20px;color:#1c2340;letter-spacing:-0.009px;left:711px;">You have changed config info, do you need to save the info ?</div>
<div class="a" style="left:801px;top:659px;width:75px;height:23px;background:#cfd5e6;border:1px solid #9ea9bf;box-sizing:border-box;"></div>
<div class="a t" style="top:660.5px;font-size:14px;line-height:20px;color:#1c2340;left:538px;width:600px;text-align:center;text-decoration:none;">是(Y)</div>
<div class="a" style="left:838px;top:678px;width:9px;height:1px;background:#1c2340;"></div>
<div class="a" style="left:882px;top:659px;width:75px;height:23px;background:#fff3c0;border:1px solid #e5c365;box-sizing:border-box;"></div>
<div class="a" style="left:884px;top:661px;width:71px;height:19px;border:1px dotted #222;box-sizing:border-box;"></div>
<div class="a t" style="top:660.5px;font-size:14px;line-height:20px;color:#1c2340;left:619.5px;width:600px;text-align:center;">否(N)</div>
<div class="a" style="left:919px;top:678px;width:10px;height:1px;background:#1c2340;"></div>
</div></body></html>
